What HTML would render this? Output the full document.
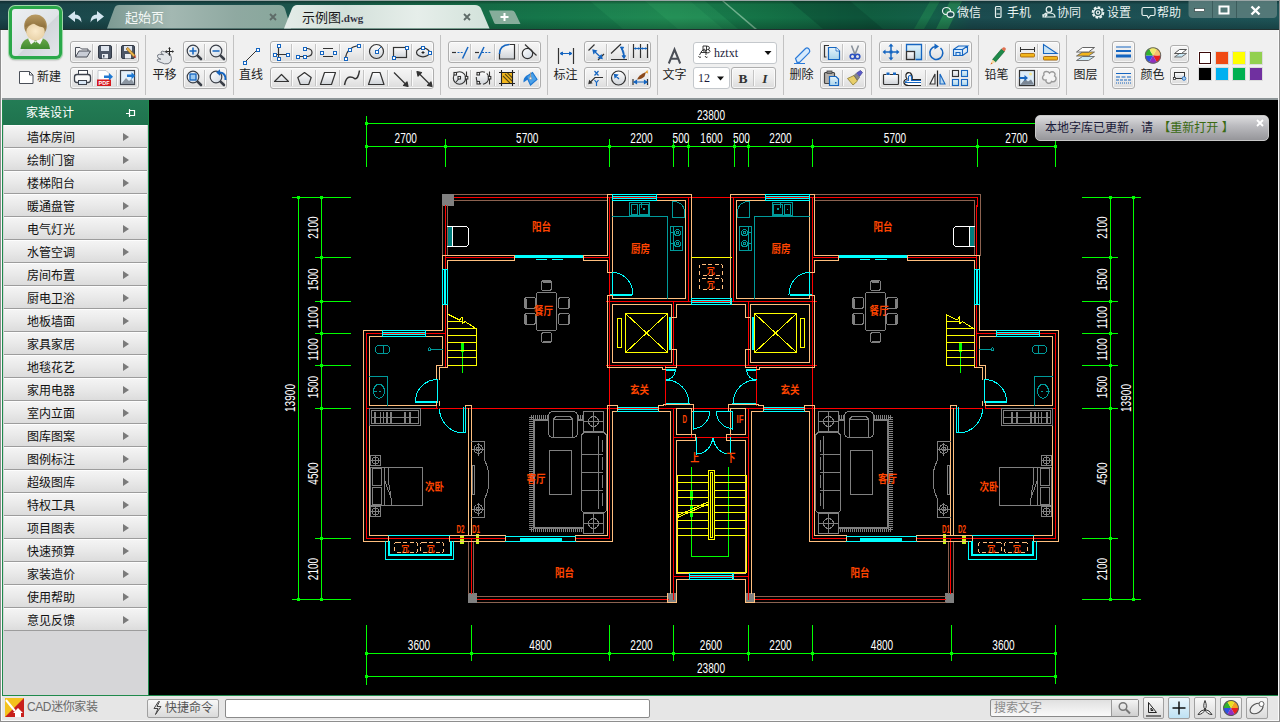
<!DOCTYPE html>
<html lang="zh-CN">
<head>
<meta charset="utf-8">
<title>CAD迷你家装 - 示例图.dwg</title>
<style>
*{box-sizing:border-box;margin:0;padding:0}
html,body{width:1280px;height:722px;overflow:hidden;background:#f0f0f0;font-family:"Liberation Sans","Noto Sans CJK SC",sans-serif;font-size:12px;color:#333}
.abs{position:absolute}
#win{position:absolute;left:0;top:0;width:1280px;height:722px;overflow:hidden;background:#f0f0f0}
#title{position:absolute;left:0;top:0;width:1280px;height:30px;background:#1b464c;border-top:1px solid #9aa6a6;border-bottom:1px solid #20302f}
#title .sheen{position:absolute;left:500px;top:0;width:780px;height:28px;background:linear-gradient(100deg,rgba(20,90,60,0) 0%,rgba(30,140,80,.75) 28%,rgba(30,130,78,.6) 45%,rgba(25,80,80,0) 68%)}
.tab{position:absolute;top:7px;height:21px;font-size:13px;line-height:20px;white-space:nowrap}
.tlink{position:absolute;top:4px;height:16px;line-height:16px;font-size:12px;color:#e8f2f0;white-space:nowrap}
#tb{position:absolute;left:2px;top:30px;width:1276px;height:68px;background:#f0f0f0}
.grp{position:absolute;height:22px;border:1px solid #aeaeae;border-radius:3px;background:linear-gradient(180deg,#f6f6f6 0%,#ececec 50%,#dcdcdc 100%);box-shadow:inset 0 0 0 1px rgba(255,255,255,.7)}
.grp i{position:absolute;top:2px;width:1px;height:16px;background:#c4c4c4;border-right:1px solid #fafafa;box-sizing:content-box}
.r1{top:41px}.r2{top:67px}
.sep{position:absolute;top:35px;width:1px;height:60px;background:#c2c2c2}
.lbl{position:absolute;top:67px;height:16px;line-height:16px;font-size:12px;color:#222;white-space:nowrap;letter-spacing:0}
svg{position:absolute;overflow:visible}
#side{position:absolute;left:2px;top:100px;width:147px;height:596px;background:#d6d6d8;border-left:1px solid #1f8a4c;border-right:1px solid #1f8a4c}
#side .hd{position:absolute;left:0;top:0;width:145px;height:25px;background:linear-gradient(180deg,#237c55,#1f734e);color:#fff;font-size:12px;line-height:26px;padding-left:23px;letter-spacing:0}
#side .it{position:absolute;left:1px;width:143px;height:23px;border-top:1px solid #fdfdfd;border-bottom:1px solid #9c9c9c;background:linear-gradient(180deg,#f4f4f4 0%,#e9e9e9 50%,#dcdcdc 100%);font-size:12px;line-height:21px;padding-left:23px;padding-top:1.5px;color:#111;letter-spacing:0}
#side .it b{position:absolute;left:119px;top:7px;width:0;height:0;border-left:6px solid #7a7a7a;border-top:4.5px solid transparent;border-bottom:4.5px solid transparent}
#cv{position:absolute;left:149px;top:100px;width:1129px;height:595px;background:#000}
#sb{position:absolute;left:0;top:695px;width:1280px;height:27px;background:#e6e6e6;border-top:1px solid #1f8a4c}
.sbtn{position:absolute;height:19px;border:1px solid #a0a0a0;border-radius:2px;background:linear-gradient(180deg,#f8f8f8,#dadada)}
</style>
</head>
<body>
<div id="win">

<div id="title">
 <svg style="left:0;top:0" width="1280" height="28" viewBox="0 0 1280 28">
  <defs>
   <linearGradient id="tb1" x1="0" x2="1" y1="0" y2="0"><stop offset="0" stop-color="#7d9a93"/><stop offset=".35" stop-color="#a3b8b2"/><stop offset=".7" stop-color="#8fa9a1"/><stop offset="1" stop-color="#87a79b"/></linearGradient>
   <linearGradient id="tb2" x1="0" x2="1" y1="0" y2="0"><stop offset="0" stop-color="#e4ece8"/><stop offset=".3" stop-color="#d3e0da"/><stop offset=".65" stop-color="#e6eeea"/><stop offset="1" stop-color="#d2e2da"/></linearGradient>
   <linearGradient id="tbg" x1="0" x2="0" y1="0" y2="1"><stop offset="0" stop-color="#fff" stop-opacity=".25"/><stop offset="1" stop-color="#fff" stop-opacity="0"/></linearGradient>
  </defs>
  <defs>
   <linearGradient id="tbase" x1="0" x2="1" y1="0" y2="0"><stop offset="0" stop-color="#1b464c"/><stop offset=".2" stop-color="#1d5350"/><stop offset=".34" stop-color="#176a48"/><stop offset=".42" stop-color="#15764a"/><stop offset=".52" stop-color="#1a804e"/><stop offset=".6" stop-color="#147246"/><stop offset=".68" stop-color="#105e40"/><stop offset=".73" stop-color="#14604a"/><stop offset=".76" stop-color="#1b4c50"/><stop offset="1" stop-color="#1e5558"/></linearGradient>
   <linearGradient id="tshade" x1="0" x2="0" y1="0" y2="1"><stop offset="0" stop-color="#000" stop-opacity=".35"/><stop offset=".12" stop-color="#000" stop-opacity=".05"/><stop offset=".6" stop-color="#000" stop-opacity="0"/><stop offset="1" stop-color="#000" stop-opacity=".22"/></linearGradient>
  </defs>
  <rect x="0" y="0" width="1280" height="28" fill="url(#tbase)"/>
  <path d="M590 0 L690 0 L723 28 L623 28Z" fill="#34a866" opacity=".22"/>
  <path d="M645 0 L705 0 L738 28 L678 28Z" fill="#3cb46c" opacity=".2"/>
  <path d="M722 0 L724 0 L757 28 L754.500 28Z" fill="#bfe8cc" opacity=".55"/>
  <path d="M790 0 L850 0 L883 28 L823 28Z" fill="#07382c" opacity=".3"/>
  <path d="M936 28 L950 0 L962 0 L948 28Z" fill="#2fa85a" opacity=".5"/>
  <path d="M914 28 L930 0 L940 0 L924 28Z" fill="#2fa85a" opacity=".3"/>
  <rect x="0" y="0" width="1280" height="28" fill="url(#tshade)"/>
  <path d="M107 27.5 L114.500 7 Q115.500 4 119 4 L279 4 Q283.500 4 285 8 L291 27.500Z" fill="url(#tb1)"/>
  <path d="M284 27.500 L292 7.500 Q293.500 4 297 4 L475 4 Q479.500 4 481 7.500 L489.500 27.500Z" fill="url(#tb2)"/>
  <path d="M489 9.500 L512 9.500 Q514 9.500 515 11.500 L520.500 23 L496 23 Q494.500 23 494 21.500Z" fill="#86ad9b"/>
  <path d="M504.500 12 v8 M500.500 16 h8" stroke="#fff" stroke-width="2" fill="none"/>
  <g stroke="#5e6b68" stroke-width="1.800" fill="none"><path d="M270 13 l6 6 M276 13 l-6 6"/><path d="M464 13 l6 6 M470 13 l-6 6"/></g>
  <!-- undo / redo -->
  <path d="M68 15.500 L75 10 L75 13.500 Q81.500 13.500 81.500 21.500 Q79.500 17.500 75 17.500 L75 21Z" fill="#d4e6f0"/>
  <path d="M104 15.500 L97 10 L97 13.500 Q90.500 13.500 90.500 21.500 Q92.500 17.500 97 17.500 L97 21Z" fill="#d4e6f0"/>
  <!-- window buttons -->
  <path d="M1188.500 0 H1277 V13 Q1277 17 1273 17 H1192.500 Q1188.500 17 1188.500 13Z" fill="#5d7f7e" opacity=".85"/>
  <path d="M1212.500 0 V17 M1236.500 0 V17" stroke="#3c5c5c" stroke-width="1"/>
  <rect x="1194.500" y="7.500" width="10" height="3" fill="#fff" stroke="#233" stroke-width=".6"/>
  <rect x="1219.500" y="5.500" width="9" height="7" fill="none" stroke="#fff" stroke-width="2"/>
  <path d="M1251.500 5.500 l8 8 M1259.500 5.500 l-8 8" stroke="#fff" stroke-width="2.400" fill="none"/>
  <!-- link icons -->
  <g fill="none" stroke="#e8f2f0" stroke-width="1.200">
   <ellipse cx="946.500" cy="10" rx="4" ry="3.500"/><ellipse cx="950.500" cy="13.500" rx="3.500" ry="2.800" fill="#1c4a50"/>
   <rect x="995.500" y="5.500" width="5.500" height="11" rx="1"/><path d="M996.500 8 h3.500 M996.500 13 h3.500"/>
   <circle cx="1049" cy="8.500" r="2.800"/><path d="M1043 16 q0 -4 6 -4 q6 0 6 4 z"/><path d="M1042 14 h5 m-2 -2 l2 2 l-2 2"/>
   <circle cx="1098" cy="11.500" r="5.300" stroke-dasharray="2.600 1.400" stroke-width="2"/><circle cx="1098" cy="11.500" r="4.200"/><circle cx="1098" cy="11.500" r="1.700"/>
   <path d="M1143.500 6.500 h10 q1.500 0 1.500 1.500 v5 q0 1.500 -1.500 1.500 h-3 l-2 2.500 l-1.500 -2.500 h-3.500 q-1.500 0 -1.500 -1.500 v-5 q0 -1.500 1.500 -1.500z"/>
  </g>
 </svg>
 <div class="tab" style="left:125px;top:6.500px;color:#f4f8f6">起始页</div>
 <div class="tab" style="left:302px;top:6.500px;color:#1a1a1a">示例图<span style="font-family:'Liberation Serif',serif;font-size:11px;font-weight:bold;color:#334">.dwg</span></div>
 <div class="tlink" style="left:957px">微信</div>
 <div class="tlink" style="left:1007px">手机</div>
 <div class="tlink" style="left:1057px">协同</div>
 <div class="tlink" style="left:1107px">设置</div>
 <div class="tlink" style="left:1157px">帮助</div>
</div>


<div id="tbbg" class="abs" style="left:0;top:30px;width:1280px;height:68px;background:#f0f0f0;border-left:2px solid #cfcfcf;border-right:2px solid #cfcfcf"></div>
<div class="abs" style="left:0;top:98px;width:1280px;height:2px;background:#8c9597"></div>
<!-- avatar -->
<div class="abs" style="left:9px;top:6px;width:53px;height:53px;border-radius:6px;background:#2aa84a;box-shadow:0 0 0 1px #9fd8a8, 0 1px 2px rgba(0,0,0,.4)"></div>
<div class="abs" style="left:12px;top:9px;width:47px;height:47px;border-radius:3px;background:linear-gradient(135deg,#eceff2 0%,#dfe3e7 55%,#d2d6db 56%,#e3e6ea 100%)"></div>

<div class="grp r1" style="left:70.0px;width:68.5px"><i style="left:21.0px"></i><i style="left:45.0px"></i></div>
<div class="grp r2" style="left:70.0px;width:68.5px"><i style="left:21.0px"></i><i style="left:45.0px"></i></div>
<div class="grp r1" style="left:182.5px;width:44.5px"><i style="left:20.6px"></i></div>
<div class="grp r2" style="left:182.5px;width:44.5px"><i style="left:20.6px"></i></div>
<div class="grp r1" style="left:269.5px;width:164.5px"><i style="left:20.3px"></i><i style="left:44.4px"></i><i style="left:68.4px"></i><i style="left:92.4px"></i><i style="left:116.5px"></i><i style="left:140.5px"></i></div>
<div class="grp r2" style="left:269.5px;width:164.5px"><i style="left:20.3px"></i><i style="left:44.4px"></i><i style="left:68.4px"></i><i style="left:92.4px"></i><i style="left:116.5px"></i><i style="left:140.5px"></i></div>
<div class="grp r1" style="left:448.0px;width:93.0px"><i style="left:20.9px"></i><i style="left:44.9px"></i><i style="left:68.9px"></i></div>
<div class="grp r2" style="left:448.0px;width:93.0px"><i style="left:20.9px"></i><i style="left:44.9px"></i><i style="left:68.9px"></i></div>
<div class="grp r1" style="left:584.0px;width:67.0px"><i style="left:21.1px"></i><i style="left:42.5px"></i></div>
<div class="grp r2" style="left:584.0px;width:67.0px"><i style="left:21.1px"></i><i style="left:42.5px"></i></div>
<div class="grp r1" style="left:820.0px;width:45.5px"><i style="left:21.0px"></i></div>
<div class="grp r2" style="left:820.0px;width:45.5px"><i style="left:21.0px"></i></div>
<div class="grp r1" style="left:879.0px;width:93.0px"><i style="left:21.0px"></i><i style="left:45.0px"></i><i style="left:69.1px"></i></div>
<div class="grp r2" style="left:879.0px;width:93.0px"><i style="left:21.0px"></i><i style="left:45.0px"></i><i style="left:69.1px"></i></div>
<div class="grp r1" style="left:1015.0px;width:45.0px"><i style="left:21.0px"></i></div>
<div class="grp r2" style="left:1015.0px;width:45.0px"><i style="left:21.0px"></i></div>
<div class="grp r1" style="left:1112.0px;width:23.0px"></div>
<div class="grp r2" style="left:1112.0px;width:23.0px"></div>
<div class="grp r2" style="left:731.0px;width:45.0px"><i style="left:21.0px"></i></div>
<div class="sep" style="left:145.0px"></div>
<div class="sep" style="left:233.0px"></div>
<div class="sep" style="left:440.0px"></div>
<div class="sep" style="left:547.0px"></div>
<div class="sep" style="left:656.8px"></div>
<div class="sep" style="left:783.0px"></div>
<div class="sep" style="left:871.1px"></div>
<div class="sep" style="left:978.0px"></div>
<div class="sep" style="left:1066.0px"></div>
<div class="sep" style="left:1103.0px"></div>
<div class="grp" style="left:1170px;top:45px;width:19px;height:18px"></div>
<div class="grp" style="left:1170px;top:67px;width:19px;height:18px"></div>
<div class="abs" style="left:693px;top:42px;width:84px;height:22px;border:1px solid #c4c8cc;border-radius:3px;background:#fff"></div>
<div class="abs" style="left:693px;top:67px;width:37px;height:22px;border:1px solid #c4c8cc;border-radius:3px;background:#fff"></div>
<div class="abs" style="left:714px;top:45px;font-family:'Liberation Serif',serif;font-size:12px;line-height:16px;color:#1a1a3a">hztxt</div>
<div class="abs" style="left:698px;top:70px;font-family:'Liberation Serif',serif;font-size:12px;line-height:16px;color:#1a1a3a">12</div>
<div class="abs" style="left:737px;top:69px;width:12px;text-align:center;font-family:'Liberation Serif',serif;font-weight:bold;font-size:13.5px;line-height:19px;color:#333">B</div>
<div class="abs" style="left:759px;top:69px;width:12px;text-align:center;font-family:'Liberation Serif',serif;font-weight:bold;font-style:italic;font-size:13.5px;line-height:19px;color:#333">I</div>
<div class="lbl" style="left:144.5px;width:40px;text-align:center">平移</div>
<div class="lbl" style="left:231.0px;width:40px;text-align:center">直线</div>
<div class="lbl" style="left:545.4px;width:40px;text-align:center">标注</div>
<div class="lbl" style="left:654.5px;width:40px;text-align:center">文字</div>
<div class="lbl" style="left:781.4px;width:40px;text-align:center">删除</div>
<div class="lbl" style="left:976.5px;width:40px;text-align:center">铅笔</div>
<div class="lbl" style="left:1065.4px;width:40px;text-align:center">图层</div>
<div class="lbl" style="left:1132.4px;width:40px;text-align:center">颜色</div>
<div class="lbl" style="left:37px;top:69px">新建</div>
<div class="abs" style="left:1198.5px;top:51.5px;width:12.5px;height:12.5px;background:#ffffff;border:1px solid #3a0a0a;box-shadow:0 0 0 1px #fff"></div>
<div class="abs" style="left:1216.0px;top:51.5px;width:12px;height:12px;background:#f04a14;box-shadow:0 0 0 1px #dcdcdc"></div>
<div class="abs" style="left:1233.0px;top:51.5px;width:12px;height:12px;background:#ffff00;box-shadow:0 0 0 1px #dcdcdc"></div>
<div class="abs" style="left:1250.0px;top:51.5px;width:12px;height:12px;background:#92d050;box-shadow:0 0 0 1px #dcdcdc"></div>
<div class="abs" style="left:1198.5px;top:68.0px;width:12px;height:12px;background:#000000;box-shadow:0 0 0 1px #dcdcdc"></div>
<div class="abs" style="left:1216.0px;top:68.0px;width:12px;height:12px;background:#00b0f0;box-shadow:0 0 0 1px #dcdcdc"></div>
<div class="abs" style="left:1233.0px;top:68.0px;width:12px;height:12px;background:#00b050;box-shadow:0 0 0 1px #dcdcdc"></div>
<div class="abs" style="left:1250.0px;top:68.0px;width:12px;height:12px;background:#7030a0;box-shadow:0 0 0 1px #dcdcdc"></div>
<svg style="left:0;top:0" width="1280" height="100" viewBox="0 0 1280 100">
 <defs>
  <radialGradient id="face" cx=".5" cy=".45" r=".6"><stop offset="0" stop-color="#fbeacb"/><stop offset="1" stop-color="#e6cfa4"/></radialGradient>
  <linearGradient id="hair" x1="0" x2="0" y1="0" y2="1"><stop offset="0" stop-color="#b89a62"/><stop offset="1" stop-color="#8d6f3c"/></linearGradient>
  <linearGradient id="shirt" x1="0" x2="0" y1="0" y2="1"><stop offset="0" stop-color="#6aa84a"/><stop offset="1" stop-color="#3f8a2e"/></linearGradient>
  <linearGradient id="lens" x1="0" x2="1" y1="0" y2="1"><stop offset="0" stop-color="#ffffff"/><stop offset="1" stop-color="#cfd8e2"/></linearGradient>
  <linearGradient id="lb" x1="0" x2="0" y1="0" y2="1"><stop offset="0" stop-color="#e6f4fb"/><stop offset="1" stop-color="#a9d4ea"/></linearGradient>
  <linearGradient id="lg" x1="0" x2="0" y1="0" y2="1"><stop offset="0" stop-color="#ffffff"/><stop offset="1" stop-color="#cfd3d8"/></linearGradient>
 </defs>
 <!-- avatar person -->
 <path d="M20.500 49 Q21 41 28 38.500 L43 38.500 Q49.500 41 50 49Z" fill="url(#shirt)"/>
 <path d="M28 38.500 L33 37 L35.500 43 L38 37 L43 38.500 L40 44.500 L35.500 41 L31 44.500Z" fill="#f4f4f4"/>
 <ellipse cx="35.500" cy="26" rx="11.300" ry="11.500" fill="url(#hair)"/>
 <ellipse cx="35.500" cy="32" rx="9.300" ry="8.600" fill="url(#face)"/>
 <path d="M25 27 Q30 25.500 33 23 Q39 27.500 46 27.500 Q44 15 35.500 15 Q26 15 25 27Z" fill="url(#hair)"/>
 <!-- new doc -->
 <path d="M19.500 71.500 h10 l3.500 3.500 v8.500 h-13.500z" fill="#fff" stroke="#4a4f58" stroke-width="1"/><path d="M29.500 71.500 v3.500 h3.500" fill="none" stroke="#4a4f58"/>
 <!-- G1 row1 -->
 <path d="M75.500 57 v-9.500 h4.500 l1.500 1.500 h6.500 v2" fill="#f4f4f6" stroke="#4a4f58"/><path d="M75.500 57 l3.500 -6 h11.500 l-3.500 6z" fill="#c9cdd6" stroke="#4a4f58"/>
 <rect x="98.500" y="45.500" width="13" height="13" rx="1.500" fill="#4c5666" stroke="#333a46"/><rect x="101" y="46" width="8" height="5" fill="#dfe5ee"/><rect x="102" y="54" width="6" height="4.500" fill="#e8ecf2"/><rect x="103" y="55" width="1.500" height="2.500" fill="#4c5666"/>
 <rect x="121.500" y="45.500" width="13" height="13" rx="1.500" fill="#4c5666" stroke="#333a46"/><rect x="124" y="46" width="8" height="5" fill="#dfe5ee"/><rect x="125" y="54" width="6" height="4.500" fill="#e8ecf2"/><path d="M126 49 l7.500 8 l1.800 -1.700 l-7.500 -8z" fill="#e8b24a" stroke="#8a5a1a" stroke-width=".6"/><path d="M133.500 57 l1.800 -1.700 l.7 2.700z" fill="#c0392b"/>
 <!-- G1 row2 -->
 <rect x="78.500" y="70.500" width="9" height="5" fill="#fff" stroke="#3c424c"/><rect x="74.500" y="74.500" width="16" height="8" rx="2.500" fill="#fafafa" stroke="#3c424c" stroke-width="1.300"/><rect x="78.500" y="80.500" width="8" height="4" fill="#d8e6f4" stroke="#3c424c"/>
 <path d="M98 70.500 h8 l3 3 v12 h-11z" fill="#fff" stroke="#b8bcc4" stroke-width=".8"/><rect x="97" y="79.500" width="14" height="6.500" fill="#d6181e"/><text x="104" y="85" text-anchor="middle" textLength="11" lengthAdjust="spacingAndGlyphs" style="font:bold 5.500px 'Liberation Sans',sans-serif" fill="#fff">PDF</text><path d="M104 75.500 h5 v-2.500 l4 3.800 l-4 3.800 v-2.500 h-5z" fill="#1e78d2"/>
 <rect x="120.500" y="70.500" width="14" height="14" fill="#e4f0fa" stroke="#3c424c" stroke-width="1.200"/><path d="M121 84 l5 -6 l3 3 l2.500 -2 l3 5z" fill="#8c96a2"/><path d="M127 74.500 h4.500 v-2.300 l3.800 3.500 l-3.800 3.500 v-2.300 h-4.500z" fill="#1e78d2"/>
 <!-- pan hand -->
 <path d="M157.500 56.500 q-.5 -2 2 -2.200 l4 .400 q-3 -1.200 -2.500 -2.700 q.8 -1.500 3.800 -.3 l4.200 2 q2.500 1.800 2.500 5 q0 4 -3.500 5 q-3.500 .8 -7 -1.200 l-3.500 -1.300 q-1.200 -1.500 .8 -2.200 l2.500 .2 q-3 -.8 -3.300 -2.700z" fill="#e2e5e9" stroke="#666c76" stroke-width=".9"/>
 <path d="M169.500 48.300 v6.400 M166.300 51.500 h6.400" stroke="#222" stroke-width="1" fill="none"/><path d="M169.500 47 l-1.400 1.700 h2.800z M169.500 56 l-1.400 -1.700 h2.800z M165 51.500 l1.700 -1.400 v2.800z M174 51.500 l-1.700 -1.400 v2.800z" fill="#222"/>
 <!-- G2 magnifiers -->
 <g><path d="M197.300 55.300 l3.700 3.700" stroke="#3a3f48" stroke-width="2.600" stroke-linecap="round"/><circle cx="193" cy="51" r="5.800" fill="url(#lens)" stroke="#3a3f48" stroke-width="1.200"/></g><g transform="translate(23 0)"><path d="M197.300 55.300 l3.700 3.700" stroke="#3a3f48" stroke-width="2.600" stroke-linecap="round"/><circle cx="193" cy="51" r="5.800" fill="url(#lens)" stroke="#3a3f48" stroke-width="1.200"/></g><g transform="translate(0 26)"><path d="M197.300 55.300 l3.700 3.700" stroke="#3a3f48" stroke-width="2.600" stroke-linecap="round"/><circle cx="193" cy="51" r="5.800" fill="url(#lens)" stroke="#3a3f48" stroke-width="1.200"/></g><g transform="translate(23 26)"><path d="M197.300 55.300 l3.700 3.700" stroke="#3a3f48" stroke-width="2.600" stroke-linecap="round"/><circle cx="193" cy="51" r="5.800" fill="url(#lens)" stroke="#3a3f48" stroke-width="1.200"/></g>
 <path d="M193 47.500 v7 M189.500 51 h7 M212.500 51 h7" stroke="#1565c0" stroke-width="1.500" fill="none"/>
 <rect x="190" y="74" width="6" height="6" fill="#9cc8ee" stroke="#1565c0" stroke-width="1.300"/>
 <path d="M224.500 80 q.5 -6 -4.500 -6.500 v2.200 l-3.800 -3.200 l3.800 -3.200 v2.200 q7 .5 6.500 8.500z" fill="#1565c0"/>
 <!-- line icon -->
 <path d="M244.500 62.500 L257.500 49.500" stroke="#333" stroke-width="1"/><rect x="243.5" y="61.5" width="3" height="3" fill="#fff" stroke="#1565c0"/><rect x="256.5" y="48.5" width="3" height="3" fill="#fff" stroke="#1565c0"/>
 <!-- G3 row1 -->
 <g fill="#fff" stroke="#1565c0" stroke-width="1">
  <path d="M278.500 46 v13 M274.500 54.500 h13" stroke="#333" stroke-width="1.200" fill="none"/><rect x="277.5" y="44.5" width="3" height="3"/><rect x="277.5" y="57.5" width="3" height="3"/><rect x="273.5" y="53.5" width="3" height="3"/><rect x="286.5" y="53.5" width="3" height="3"/>
  <path d="M297.500 56.500 h10 q4.500 -.5 4.500 -4 q0 -3.500 -4.500 -4 h-3" stroke="#333" stroke-width="1.200" fill="none"/><rect x="296.5" y="55.5" width="3" height="3"/><rect x="303.5" y="55.5" width="3" height="3"/><rect x="303.5" y="47.5" width="3" height="3"/>
  <path d="M323 48.500 h10 M323 56.500 h10" stroke="#333" stroke-width="1.200" fill="none"/><rect x="320.5" y="51.5" width="3" height="3"/><rect x="333.5" y="51.5" width="3" height="3"/>
  <path d="M345.500 58.500 q1 -11 13 -13" stroke="#333" stroke-width="1.200" fill="none"/><rect x="344.5" y="57.5" width="3" height="3"/><rect x="348.5" y="48.5" width="3" height="3"/><rect x="357.5" y="44.5" width="3" height="3"/>
  <circle cx="376.500" cy="51.500" r="7" stroke="#333" stroke-width="1.200" fill="url(#lg)"/><path d="M376.500 51.500 l4.500 -4.500" stroke="#1565c0" fill="none"/><rect x="375.5" y="50.5" width="3" height="3"/>
  <rect x="393.500" y="47.500" width="13" height="10" stroke="#333" stroke-width="1.200" fill="url(#lg)"/><rect x="392.5" y="56.5" width="3" height="3"/><rect x="405.5" y="46.5" width="3" height="3"/>
  <ellipse cx="423" cy="52.500" rx="6.500" ry="4.300" stroke="#333" stroke-width="1.200" fill="url(#lg)"/><path d="M423 51 v3 M421.500 52.500 h3" stroke="#222" fill="none"/><rect x="421.5" y="46.5" width="3" height="3"/><rect x="428.5" y="51.5" width="3" height="3"/>
 </g>
 <!-- G3 row2 -->
 <g fill="url(#lg)" stroke="#333" stroke-width="1.200" stroke-linejoin="round">
  <path d="M274.500 81.500 l7 -7 l7 7z"/>
  <path d="M304.500 72.500 l6.700 5 l-2.500 7 h-8.400 l-2.500 -7z"/>
  <path d="M320.500 84.500 l4 -12 h11 l-4 12z"/>
  <path d="M344.500 85 q1.500 -8 5.500 -8 q3 0 4.500 1.500 q3.500 1.500 5 -8" fill="none" stroke-width="1.500"/>
  <path d="M368.500 84.500 l4 -12 h7.500 l4 12z"/>
  <path d="M394 72.500 l13 13" fill="none"/><path d="M408 86.500 l-4.500 -1 l3.500 -3.500z" fill="#333"/>
  <path d="M418 72.500 l13 13" fill="none"/><path d="M432 86.500 l-4.500 -1 l3.500 -3.500z M417 71.500 l4.500 1 l-3.500 3.500z" fill="#333"/>
 </g>
 <!-- G4 row1 -->
 <g fill="none" stroke="#333" stroke-width="1.200">
  <path d="M452 52.500 h4"/><path d="M457.500 52.500 h6" stroke="#1565c0" stroke-dasharray="2 1.200"/><path d="M468 47 l-5.500 11.500" stroke="#1565c0" stroke-width="1.500"/>
  <path d="M475 52.500 h4"/><path d="M482 52.500 h9" stroke="#1565c0" stroke-dasharray="2 1.200"/><path d="M484 47 l-5.500 11.500" stroke="#1565c0" stroke-width="1.500"/>
  <path d="M499.500 53 v6 h15 v-14.500 h-5" fill="url(#lg)"/><path d="M499.500 54 q0 -9 10 -9.500" stroke="#1565c0" stroke-width="1.500"/>
  <circle cx="527.500" cy="53.500" r="5.200" fill="url(#lens)"/><path d="M525 44.500 l11.500 11"/>
 </g>
 <!-- G4 row2 -->
 <g fill="none" stroke="#333" stroke-width="1.100">
  <circle cx="459.500" cy="78" r="6.200" fill="url(#lg)"/><path d="M466.500 71.500 v13 M456 82 l3.500 -4"/><rect x="458" y="76.500" width="2.500" height="2.500" fill="#fff"/><rect x="454" y="72.500" width="2.500" height="2.500" fill="#fff"/><rect x="465.300" y="76.500" width="2.500" height="2.500" fill="#fff"/>
  <circle cx="482.500" cy="78" r="6.200" fill="url(#lg)" stroke-dasharray="9 2"/><path d="M489.500 71.500 v13"/><rect x="477" y="72.500" width="2.500" height="2.500" fill="#fff"/><rect x="477" y="81.500" width="2.500" height="2.500" fill="#fff"/><rect x="488.300" y="76.500" width="2.500" height="2.500" fill="#fff"/>
  <rect x="501.500" y="72.500" width="11" height="11" fill="#f2b61c" stroke="none"/><path d="M503 76 l7 7 M505 74 l7 7 M507.500 73 l5 5" stroke="#5a4a10"/><path d="M501.500 70 v16 M512.500 70 v16 M499 72.500 h16 M499 83.500 h16" stroke="#222"/>
  <path d="M523.500 82.500 q-.5 -5 3.500 -7 l1.500 3.500z" fill="#1e78d2" stroke="none"/><path d="M526.500 76.500 l6 -4 l4.500 7 l-6.500 5.500z" fill="#4aa0e8" stroke="#1e78d2"/><path d="M530.500 78 v-5.500" stroke="#999"/><circle cx="530.500" cy="78.300" r="1.200" fill="#eee" stroke="#888" stroke-width=".6"/>
 </g>
 <!-- dim icon -->
 <path d="M558.500 48 v16 M573.500 48 v16" stroke="#333" stroke-width="1.200"/><path d="M560 53.500 h12 M560 53.500 l2.500 -1.500 v3z M572 53.500 l-2.500 -1.500 v3z" stroke="#1565c0" fill="#1565c0" stroke-width="1"/>
 <!-- G5 row1 -->
 <g fill="none" stroke="#333" stroke-width="1.200">
  <path d="M588.500 50.500 l6 -6 M598 60 l6 -6"/><path d="M593 50 l9 8.500 M593 50 l3.300 .8 l-2.500 2.500z M602 58.500 l-3.300 -.8 l2.500 -2.500z" stroke="#1565c0" fill="#1565c0"/>
  <path d="M611 59.500 h16 M611 53.500 l10 -9.500"/><path d="M620.500 47 q4.500 3.500 3.500 11 M620.500 47 l3.200 .3 l-1.800 2.500z M624 58.500 l-1.800 -2.800 h3.300z" stroke="#1565c0" fill="#1565c0" stroke-width="1"/>
  <path d="M633.500 44 v14 M640.500 44 v14 M647.500 44 v14"/><path d="M634 48.500 h13" stroke="#1565c0"/><path d="M634 48.500 l2 -1.300 v2.600z M640 48.500 l-2 -1.300 v2.600z M641 48.500 l2 -1.300 v2.600z M647 48.500 l-2 -1.300 v2.600z" fill="#1565c0" stroke="none"/>
 </g>
 <!-- G5 row2 -->
 <g fill="none" stroke="#333" stroke-width="1.200">
  <path d="M589 83.500 l6 -6 h8 M589 83.500 l2.500 -.5 l-2 -2z" /><path d="M594.500 71 l4 4.500 M598.500 71 l-4 4.500 M594.500 80 l2 2.500 l2 -2.500 M596.500 82.500 v3.500" stroke="#1565c0"/>
  <circle cx="618.500" cy="78" r="7" fill="url(#lg)"/><path d="M619 79 l-4.500 -4.500 M614.500 74.500 l3 .5 l-2.500 2.500z" stroke="#1565c0" fill="#1565c0"/>
  <path d="M633 79 v6 M647.500 79 v6" /><path d="M634 82 h13 M634 82 l2.500 -1.500 v3z M647 82 l-2.500 -1.500 v3z" stroke="#1565c0" fill="#1565c0"/><path d="M637 79.500 q2 -5 9 -7.500 l-1.500 4.500 q-3 3 -7.500 3z" fill="#8b4a1c" stroke="none"/><path d="M645 72.500 l2.500 -2.500 l.5 3.500z" fill="#e8a030" stroke="none"/>
 </g>
 <!-- text A -->
 <path d="M668.800 63.500 l5.700 -14 l5.700 14 M670.800 58.800 h7.400" fill="none" stroke="#4a4e56" stroke-width="2"/>
 <!-- font combo icon -->
 <path d="M699.500 55 q2 -5 5 -6 M701 52.500 h6 M704.500 49 q2 2 1.500 6 M703 46 h3.500 v5 h-3.500z M706.500 46 q3 0 3 2 q0 1.500 -2 1.500 q2.500 0 2.500 2 q0 1.500 -3.500 1.500 M698.500 56 q1 2.500 2.500 1 M705 56 q1 2.500 2.500 1" fill="none" stroke="#222" stroke-width=".9"/>
 <path d="M764.500 51 h7 l-3.500 4z M717 76.500 h7 l-3.500 4z" fill="#111"/>
 <!-- eraser -->
 <path d="M795.500 58.500 l10 -10 q1.500 -1.200 3 0 l1 1.500 q.8 1.500 -.5 2.800 l-9.500 9.500 h-2.500z" fill="#d6eafc" stroke="#2a7ad8" stroke-width="1.200"/><path d="M794 63.500 h11" stroke="#2a7ad8" stroke-width="1"/>
 <!-- G6 -->
 <path d="M829 45.500 h-4.500 v11.500 h2" fill="none" stroke="#333" stroke-width="1.200"/><path d="M828.500 47.500 h7.500 l3.500 3.500 v8.500 h-11z" fill="url(#lb)" stroke="#1565c0" stroke-width="1.200"/><path d="M836 47.500 v3.500 h3.500" fill="#fff" stroke="#1565c0" stroke-width=".8"/>
 <path d="M851.500 45.500 l3.500 9 M858.500 45.500 l-3.500 9" stroke="#8a929c" stroke-width="1.600" fill="none"/><circle cx="852.500" cy="56.500" r="2.300" fill="none" stroke="#2a4fc0" stroke-width="1.600"/><circle cx="857.500" cy="56.500" r="2.300" fill="none" stroke="#2a4fc0" stroke-width="1.600"/>
 <rect x="824.500" y="72.500" width="10" height="11" rx="1" fill="#b4b0aa" stroke="#444" stroke-width="1.200"/><rect x="827" y="71" width="5" height="2.500" fill="#888" stroke="#444" stroke-width=".8"/><path d="M829.500 76.500 h6.500 l2.500 2.500 v6.500 h-9z" fill="url(#lb)" stroke="#1565c0" stroke-width="1.200"/><rect x="835" y="82" width="1.500" height="1.500" fill="#1565c0"/>
 <path d="M847.500 78.500 l6.500 -3 l3.500 5.500 l-4.500 4z" fill="#e8cf6a" stroke="#8a7a30" stroke-width=".8"/><path d="M854 75.500 l2 -2 l3.500 4 l-2 2.500z" fill="#888" stroke="#555" stroke-width=".6"/><path d="M856.500 73 l4 -2.500 l2 2 l-3 4z" fill="#5a5ac8" stroke="#338" stroke-width=".6"/>
 <!-- G7 row1 -->
 <path d="M891 45 v14 M884 52 h14" stroke="#1565c0" stroke-width="1.500"/><path d="M891 43.500 l-2.500 3 h5z M891 60.500 l-2.500 -3 h5z M882.500 52 l3 -2.500 v5z M899.500 52 l-3 -2.500 v5z" fill="#1565c0"/><rect x="889.5" y="50.5" width="3" height="3" fill="#1565c0"/>
 <path d="M906.500 51 v-6.500 h15 v15 h-6" fill="url(#lb)" stroke="#1565c0" stroke-width="1.300"/><rect x="906.500" y="51.500" width="8" height="8" fill="url(#lg)" stroke="#333" stroke-width="1.300"/>
 <path d="M935.500 46.500 a6.500 6.500 0 1 0 5 1.500" fill="none" stroke="#1565c0" stroke-width="1.600"/><path d="M934.500 43.500 l4.500 3 l-4.500 3z" fill="#1565c0"/>
 <path d="M953.500 49.500 h9 v6 h-9z M953.500 49.500 l5 -3.500 h9 l-5 3.500 M967.500 46 v6 l-5 3.500 M956 55.500 v-3 h4 v3" fill="#d6eafc" stroke="#1565c0" stroke-width="1.100"/>
 <!-- G7 row2 -->
 <path d="M883.500 74.500 v9 q0 1 1 1 h13 q1 0 1 -1 v-9" fill="url(#lg)" stroke="#333" stroke-width="1.200"/><path d="M883.500 74.500 h3 m3 0 h3.500 m3 0 h2.500" stroke="#333" stroke-width="1.200"/><rect x="886.500" y="72.500" width="3" height="2.500" fill="#1565c0"/><rect x="893" y="72.500" width="3" height="2.500" fill="#1565c0"/>
 <path d="M921 79.500 h-9 q1 -3.500 -1.500 -6.500 q-3 -1.500 -4.500 1.500 q-.5 3 1 4.500 q-3.500 1 -3 4 q1 2.500 4.500 2.500 h12.500" fill="#fff" stroke="#222" stroke-width="1.200"/><path d="M921 80.500 h-9.500 v-4 q-1.500 -2 -3 0 v4 q-3 0 -3 2 h15.500" fill="none" stroke="#1565c0" stroke-width="1.200"/>
 <path d="M937.500 70.500 v16" stroke="#222" stroke-width="1.200"/><path d="M935 74 v10 h-5z" fill="#f6f6f6" stroke="#333" stroke-width="1.100"/><path d="M940 74 v10 h5z" fill="#b6d8f0" stroke="#1565c0" stroke-width="1.100"/>
 <g fill="url(#lb)" stroke="#1565c0" stroke-width="1.100"><rect x="961.500" y="70.500" width="6" height="6"/><rect x="952.500" y="79.500" width="6" height="6"/><rect x="961.500" y="79.500" width="6" height="6"/></g><rect x="952.500" y="70.500" width="6" height="6" fill="url(#lg)" stroke="#333" stroke-width="1.100"/>
 <!-- pencil -->
 <path d="M992.500 59.500 l9 -10.500 l3 2.500 l-9 10.500z" fill="#1e8a4a" stroke="#0e5a2a" stroke-width=".6"/><path d="M1001.500 49 l1.500 -1.500 q1.500 -.5 2.500 .5 q.8 1 0 2 l-1 1.500z" fill="#e07050"/><path d="M992.500 59.500 l3 2.500 l-5 2.500z" fill="#f4d8a0"/><path d="M990.500 64.500 l1 -2 l1 1z" fill="#e05a10"/>
 <!-- G8 -->
 <path d="M1020.500 47 v5 M1034.500 47 v5 M1020.500 49.500 h14" stroke="#333" stroke-width="1"/><rect x="1020.500" y="53.500" width="14" height="3.500" rx=".8" fill="#f2b61c" stroke="#a8680a" stroke-width=".9"/>
 <path d="M1043.500 44.500 v9 h13.500z" fill="#c8e4f6" stroke="#1565c0" stroke-width="1.100"/><rect x="1043.500" y="56.500" width="14" height="3.500" rx=".8" fill="#f2b61c" stroke="#a8680a" stroke-width=".9"/>
 <rect x="1019.500" y="70.500" width="15" height="15" fill="#dcecf8" stroke="#333" stroke-width="1.200"/><path d="M1020 85 l5 -6 l3 2.500 l3 -2 l3 5z" fill="#7a8694"/><circle cx="1030.500" cy="74" r="1.500" fill="#f8e890"/><path d="M1019.500 77 h5 v-2 l3.500 3 l-3.500 3 v-2 h-5z" fill="#1565c0"/>
 <path d="M1044 75 q-1 -3.500 2.500 -3.500 q2 0 3 1.500 q1.500 -2 4 -1 q2.500 1.500 1 4 q2.500 1.500 1 4.500 q-1.500 2 -4 1 q-1 2.500 -4 1.500 q-2 -1 -1.500 -3 q-3 .5 -3.500 -2 q0 -2 1.500 -3z" fill="#f4f4f4" stroke="#9a9a9a" stroke-width="1.400"/>
 <!-- layers -->
 <path d="M1076.500 60.500 l6 -4 h12 l-6 4z" fill="#c8e8f6" stroke="#666" stroke-width=".9"/><path d="M1076.500 56 l6 -4 h12 l-6 4z" fill="#f2b61c" stroke="#666" stroke-width=".9"/><path d="M1076.500 52 l6 -4.500 h12 l-6 4.500z" fill="#fff" stroke="#555" stroke-width=".9"/>
 <!-- line weight buttons -->
 <path d="M1116 47 h15" stroke="#1565c0" stroke-width="1"/><path d="M1116 51 h15" stroke="#1565c0" stroke-width="2"/><path d="M1116 56 h15" stroke="#1565c0" stroke-width="3"/>
 <path d="M1116 73.500 h15" stroke="#1565c0" stroke-width="1"/><path d="M1116 77 h15" stroke="#1565c0" stroke-width="1" stroke-dasharray="4 1.500"/><path d="M1116 80 h15" stroke="#1565c0" stroke-width="1" stroke-dasharray="3 1"/><path d="M1116 83 h15" stroke="#1565c0" stroke-width="1" stroke-dasharray="1 1"/>
 <!-- color wheel -->
 <g transform="rotate(30 1153 55.500)"><path d="M1153 55.500 L1153 47.500 A8 8 0 0 1 1159.900 51.500Z" fill="#f2a020"/><path d="M1153 55.500 L1159.900 51.500 A8 8 0 0 1 1159.900 59.500Z" fill="#e82020"/><path d="M1153 55.500 L1159.900 59.500 A8 8 0 0 1 1153 63.500Z" fill="#9030c0"/><path d="M1153 55.500 L1153 63.500 A8 8 0 0 1 1146.100 59.500Z" fill="#3050e0"/><path d="M1153 55.500 L1146.100 59.500 A8 8 0 0 1 1146.100 51.500Z" fill="#30b030"/><path d="M1153 55.500 L1146.100 51.500 A8 8 0 0 1 1153 47.500Z" fill="#e8e020"/><circle cx="1153" cy="55.500" r="7.800" fill="none" stroke="#666" stroke-width="1"/><ellipse cx="1153" cy="51.500" rx="5.500" ry="3" fill="#fff" opacity=".35"/></g>
 <!-- small buttons icons -->
 <path d="M1174.500 57 l5 -3.500 h7 l-5 3.500z" fill="#c8e8f6" stroke="#555" stroke-width=".8"/><path d="M1174.500 53.500 l5 -4 h7 l-5 4z" fill="#fff" stroke="#444" stroke-width=".9"/>
 <rect x="1174.500" y="72.500" width="10" height="6" fill="url(#lg)" stroke="#333" stroke-width="1"/><rect x="1173.500" y="77.500" width="2" height="2" fill="#fff" stroke="#333" stroke-width=".8"/><circle cx="1184" cy="78.500" r="1.800" fill="#a8d0ee" stroke="#1565c0" stroke-width=".8"/>
</svg>

<div id="side"><div class="hd">家装设计<svg style="left:123px;top:9px" width="10" height="9" viewBox="0 0 10 9"><path d="M0 4.500 h3 M3.500 1.500 h5 v5 h-5z M3.500 0 v8" stroke="#fff" stroke-width="1.200" fill="none"/></svg></div><div class="it" style="top:25px">墙体房间<b></b></div><div class="it" style="top:48px">绘制门窗<b></b></div><div class="it" style="top:71px">楼梯阳台<b></b></div><div class="it" style="top:94px">暖通盘管<b></b></div><div class="it" style="top:117px">电气灯光<b></b></div><div class="it" style="top:140px">水管空调<b></b></div><div class="it" style="top:163px">房间布置<b></b></div><div class="it" style="top:186px">厨电卫浴<b></b></div><div class="it" style="top:209px">地板墙面<b></b></div><div class="it" style="top:232px">家具家居<b></b></div><div class="it" style="top:255px">地毯花艺<b></b></div><div class="it" style="top:278px">家用电器<b></b></div><div class="it" style="top:301px">室内立面<b></b></div><div class="it" style="top:324px">图库图案<b></b></div><div class="it" style="top:347px">图例标注<b></b></div><div class="it" style="top:370px">超级图库<b></b></div><div class="it" style="top:393px">特权工具<b></b></div><div class="it" style="top:416px">项目图表<b></b></div><div class="it" style="top:439px">快速预算<b></b></div><div class="it" style="top:462px">家装造价<b></b></div><div class="it" style="top:485px">使用帮助<b></b></div><div class="it" style="top:508px">意见反馈<b></b></div></div>
<div id="cv"><svg width="1129" height="595" viewBox="149 100 1129 595" style="left:0;top:0;position:absolute">
<style>.lat{font-family:"Liberation Sans",sans-serif}.cjk{font-family:"Liberation Sans","Noto Sans CJK SC",sans-serif}.nar{font-family:"Liberation Sans Narrow","Liberation Sans",sans-serif}</style>
<g shape-rendering="crispEdges"><rect x="365" y="145" width="3" height="3" fill="#00ff00"/><rect x="444" y="145" width="3" height="3" fill="#00ff00"/><rect x="608" y="145" width="3" height="3" fill="#00ff00"/><rect x="672" y="145" width="3" height="3" fill="#00ff00"/><rect x="687" y="145" width="3" height="3" fill="#00ff00"/><rect x="733" y="145" width="3" height="3" fill="#00ff00"/><rect x="747" y="145" width="3" height="3" fill="#00ff00"/><rect x="811" y="145" width="3" height="3" fill="#00ff00"/><rect x="976" y="145" width="3" height="3" fill="#00ff00"/><rect x="1054" y="145" width="3" height="3" fill="#00ff00"/><rect x="365" y="122" width="3" height="3" fill="#00ff00"/><rect x="365" y="652" width="3" height="3" fill="#00ff00"/><rect x="470" y="652" width="3" height="3" fill="#00ff00"/><rect x="608" y="652" width="3" height="3" fill="#00ff00"/><rect x="672" y="652" width="3" height="3" fill="#00ff00"/><rect x="747" y="652" width="3" height="3" fill="#00ff00"/><rect x="811" y="652" width="3" height="3" fill="#00ff00"/><rect x="950" y="652" width="3" height="3" fill="#00ff00"/><rect x="1054" y="652" width="3" height="3" fill="#00ff00"/><rect x="365" y="675" width="3" height="3" fill="#00ff00"/><rect x="1054" y="675" width="3" height="3" fill="#00ff00"/><rect x="320" y="196" width="3" height="3" fill="#00ff00"/><rect x="320" y="256" width="3" height="3" fill="#00ff00"/><rect x="320" y="300" width="3" height="3" fill="#00ff00"/><rect x="320" y="332" width="3" height="3" fill="#00ff00"/><rect x="320" y="364" width="3" height="3" fill="#00ff00"/><rect x="320" y="407" width="3" height="3" fill="#00ff00"/><rect x="320" y="537" width="3" height="3" fill="#00ff00"/><rect x="320" y="598" width="3" height="3" fill="#00ff00"/><rect x="297" y="196" width="3" height="3" fill="#00ff00"/><rect x="297" y="598" width="3" height="3" fill="#00ff00"/><rect x="1109" y="196" width="3" height="3" fill="#00ff00"/><rect x="1109" y="256" width="3" height="3" fill="#00ff00"/><rect x="1109" y="300" width="3" height="3" fill="#00ff00"/><rect x="1109" y="332" width="3" height="3" fill="#00ff00"/><rect x="1109" y="364" width="3" height="3" fill="#00ff00"/><rect x="1109" y="407" width="3" height="3" fill="#00ff00"/><rect x="1109" y="537" width="3" height="3" fill="#00ff00"/><rect x="1109" y="598" width="3" height="3" fill="#00ff00"/><rect x="1132" y="196" width="3" height="3" fill="#00ff00"/><rect x="1132" y="598" width="3" height="3" fill="#00ff00"/><rect x="442" y="194" width="12" height="12" fill="#808080"/><rect x="468" y="593" width="9" height="10" fill="#808080"/><rect x="945" y="593" width="9" height="10" fill="#808080"/><rect x="668" y="593" width="9" height="10" fill="#808080"/><rect x="745" y="593" width="9" height="10" fill="#808080"/><rect x="514" y="255" width="70" height="3" fill="#00ffff"/><rect x="838" y="255" width="70" height="3" fill="#00ffff"/><rect x="617" y="407" width="42" height="3" fill="#00ffff"/><rect x="763" y="407" width="42" height="3" fill="#00ffff"/><rect x="520" y="538" width="42" height="3" fill="#00ffff"/><rect x="860" y="538" width="42" height="3" fill="#00ffff"/><rect x="609" y="293.5" width="23" height="2" fill="#00ffff"/><rect x="790" y="293.5" width="23" height="2" fill="#00ffff"/><rect x="415" y="400.5" width="23" height="2.5" fill="#00ffff"/><rect x="984" y="400.5" width="23" height="2.5" fill="#00ffff"/><rect x="665" y="369" width="11" height="2" fill="#00ffff"/><rect x="746" y="369" width="11" height="2" fill="#00ffff"/><rect x="665" y="378.5" width="5" height="2" fill="#00ffff"/><rect x="752" y="378.5" width="5" height="2" fill="#00ffff"/><rect x="665" y="402.5" width="25" height="2" fill="#00ffff"/><rect x="732" y="402.5" width="25" height="2" fill="#00ffff"/><rect x="668.5" y="316.5" width="2" height="33.5" fill="#00ffff"/><rect x="751.5" y="316.5" width="2" height="33.5" fill="#00ffff"/><rect x="448" y="227" width="4" height="19" fill="#007c7c"/><rect x="970" y="227" width="4" height="19" fill="#007c7c"/><rect x="634" y="209" width="1" height="1" fill="#009a9a"/><rect x="787" y="209" width="1" height="1" fill="#009a9a"/><rect x="643" y="208" width="2" height="2" fill="#009a9a"/><rect x="777" y="208" width="2" height="2" fill="#009a9a"/><rect x="543" y="280.5" width="7.5" height="2.5" fill="#808080"/><rect x="871.5" y="280.5" width="7.5" height="2.5" fill="#808080"/><rect x="543" y="340.5" width="7.5" height="2.5" fill="#808080"/><rect x="871.5" y="340.5" width="7.5" height="2.5" fill="#808080"/><rect x="524.5" y="299" width="2.5" height="8.5" fill="#808080"/><rect x="895" y="299" width="2.5" height="8.5" fill="#808080"/><rect x="524.5" y="315" width="2.5" height="8.5" fill="#808080"/><rect x="895" y="315" width="2.5" height="8.5" fill="#808080"/><rect x="567.5" y="299" width="2.5" height="8.5" fill="#808080"/><rect x="852" y="299" width="2.5" height="8.5" fill="#808080"/><rect x="567.5" y="315" width="2.5" height="8.5" fill="#808080"/><rect x="852" y="315" width="2.5" height="8.5" fill="#808080"/><rect x="461" y="342" width="3" height="10" fill="#00ff00"/><rect x="958.5" y="342" width="3" height="10" fill="#00ff00"/><rect x="379" y="391" width="2" height="1" fill="#009a9a"/><rect x="1041" y="391" width="2" height="1" fill="#009a9a"/><rect x="708" y="470" width="7" height="70" fill="#000"/><rect x="690" y="490" width="3" height="10" fill="#00ff00"/><rect x="690" y="506" width="3" height="11" fill="#00ff00"/><rect x="460" y="536" width="4" height="8" fill="#c8f018"/><rect x="962" y="536" width="4" height="8" fill="#c8f018"/><rect x="476" y="534" width="3" height="10" fill="#c8f018"/><rect x="943" y="534" width="3" height="10" fill="#c8f018"/></g>
<g fill="none" shape-rendering="crispEdges" stroke-linecap="square">
<path stroke="#00ff00" stroke-width="1" d="M366.5 123.5 L1035.5 123.5 M366.5 146.5 L1055.5 146.5 M366.5 116.5 L366.5 166.5 M445.5 139.5 L445.5 166.5 M609.5 139.5 L609.5 166.5 M673.5 139.5 L673.5 166.5 M688.5 139.5 L688.5 166.5 M734.5 139.5 L734.5 166.5 M748.5 139.5 L748.5 166.5 M812.5 139.5 L812.5 166.5 M977.5 139.5 L977.5 166.5 M1055.5 139.5 L1055.5 166.5 M366.5 653.5 L1055.5 653.5 M366.5 676.5 L1055.5 676.5 M366.5 625.5 L366.5 684.5 M1055.5 625.5 L1055.5 683.5 M471.5 625.5 L471.5 660.5 M609.5 625.5 L609.5 660.5 M673.5 625.5 L673.5 660.5 M748.5 625.5 L748.5 660.5 M812.5 625.5 L812.5 660.5 M951.5 625.5 L951.5 660.5 M298.5 197.5 L298.5 599.5 M321.5 197.5 L321.5 599.5 M292.5 197.5 L350.5 197.5 M292.5 599.5 L350.5 599.5 M315.5 257.5 L350.5 257.5 M315.5 301.5 L350.5 301.5 M315.5 333.5 L350.5 333.5 M315.5 365.5 L350.5 365.5 M315.5 408.5 L350.5 408.5 M315.5 538.5 L350.5 538.5 M1133.5 197.5 L1133.5 599.5 M1110.5 197.5 L1110.5 599.5 M1082.5 197.5 L1140.5 197.5 M1082.5 599.5 L1140.5 599.5 M1082.5 257.5 L1117.5 257.5 M1082.5 301.5 L1117.5 301.5 M1082.5 333.5 L1117.5 333.5 M1082.5 365.5 L1117.5 365.5 M1082.5 408.5 L1117.5 408.5 M1082.5 538.5 L1117.5 538.5 M462.5 342.5 L462.5 372.5 M960.5 342.5 L960.5 372.5 M691.5 467.5 L691.5 556.5 L728.5 556.5 L728.5 467.5"/>
<path stroke="#ff0000" stroke-width="1" d="M454.5 197.5 L968.5 197.5 M445.5 205.5 L445.5 366.5 M976.5 205.5 L976.5 366.5 M445.5 257.5 L514.5 257.5 M976.5 257.5 L908.5 257.5 M583.5 257.5 L609.5 257.5 M838.5 257.5 L812.5 257.5 M609.5 197.5 L609.5 538.5 M812.5 197.5 L812.5 538.5 M688.5 197.5 L688.5 301.5 M733.5 197.5 L733.5 301.5 M606.5 301.5 L816.5 301.5 M673.5 301.5 L673.5 365.5 M748.5 301.5 L748.5 365.5 M673.5 408.5 L673.5 599.5 M748.5 408.5 L748.5 599.5 M606.5 365.5 L816.5 365.5 M665.5 365.5 L665.5 405.5 M756.5 365.5 L756.5 405.5 M366.5 408.5 L437.5 408.5 M1055.5 408.5 L985.5 408.5 M439.5 408.5 L711.5 408.5 M982.5 408.5 L711.5 408.5 M366.5 333.5 L445.5 333.5 M1055.5 333.5 L976.5 333.5 M366.5 333.5 L366.5 538.5 M1055.5 333.5 L1055.5 538.5 M366.5 538.5 L505.5 538.5 M1055.5 538.5 L916.5 538.5 M575.5 538.5 L609.5 538.5 M846.5 538.5 L812.5 538.5 M471.5 538.5 L471.5 593.5 M950.5 538.5 L950.5 593.5 M477.5 599.5 L668.5 599.5 M945.5 599.5 L754.5 599.5 M673.5 437.5 L748.5 437.5 M673.5 576.5 L748.5 576.5 M436.5 405.5 L436.5 408.5 M985.5 405.5 L985.5 408.5 M691.5 428.5 L691.5 437.5 M730.5 428.5 L730.5 437.5 M968.5 197.5 L977.5 197.5 L977.5 206.5"/>
<path stroke="#8c6250" stroke-width="1" d="M454.5 194.5 L607.5 194.5 M968.5 194.5 L814.5 194.5 M454.5 200.5 L607.5 200.5 M968.5 200.5 L814.5 200.5 M442.5 205.5 L442.5 255.5 M447.5 205.5 L447.5 255.5 M968.5 194.5 L980.5 194.5 L980.5 255.5 M968.5 200.5 L974.5 200.5 L974.5 255.5 M468.5 541.5 L468.5 593.5 M953.5 541.5 L953.5 593.5 M473.5 541.5 L473.5 593.5 M948.5 541.5 L948.5 593.5 M477.5 596.5 L667.5 596.5 M945.5 596.5 L755.5 596.5 M477.5 602.5 L667.5 602.5 M945.5 602.5 L755.5 602.5"/>
<path stroke="#ffbf7f" stroke-width="1" d="M442.5 330.5 L363.5 330.5 L363.5 541.5 L388.5 541.5 L388.5 535.5 M979.5 330.5 L1058.5 330.5 L1058.5 541.5 L1033.5 541.5 L1033.5 535.5 M442.5 330.5 L442.5 255.5 L514.5 255.5 L514.5 260.5 L447.5 260.5 L447.5 367.5 L439.5 367.5 L439.5 379.5 M979.5 330.5 L979.5 255.5 L907.5 255.5 L907.5 260.5 L974.5 260.5 L974.5 367.5 L982.5 367.5 L982.5 379.5 M436.5 379.5 L436.5 365.5 L442.5 365.5 L442.5 336.5 L369.5 336.5 L369.5 405.5 L436.5 405.5 L436.5 401.5 M985.5 379.5 L985.5 365.5 L979.5 365.5 L979.5 336.5 L1052.5 336.5 L1052.5 405.5 L985.5 405.5 L985.5 401.5 M439.5 401.5 L439.5 405.5 M982.5 401.5 L982.5 405.5 M388.5 535.5 L369.5 535.5 L369.5 408.5 M1033.5 535.5 L1052.5 535.5 L1052.5 408.5 M465.5 408.5 L465.5 405.5 L471.5 405.5 L471.5 535.5 M956.5 408.5 L956.5 405.5 L950.5 405.5 L950.5 535.5 M468.5 408.5 L468.5 535.5 M953.5 408.5 L953.5 535.5 M449.5 535.5 L505.5 535.5 L505.5 541.5 L449.5 541.5Z M972.5 535.5 L916.5 535.5 L916.5 541.5 L972.5 541.5Z M607.5 535.5 L607.5 405.5 L617.5 405.5 L617.5 411.5 L612.5 411.5 L612.5 541.5 L575.5 541.5 L575.5 535.5 L607.5 535.5 M814.5 535.5 L814.5 405.5 L804.5 405.5 L804.5 411.5 L809.5 411.5 L809.5 541.5 L846.5 541.5 L846.5 535.5 L814.5 535.5 M607.5 255.5 L583.5 255.5 L583.5 260.5 L607.5 260.5 L607.5 272.5 L612.5 272.5 M814.5 255.5 L838.5 255.5 L838.5 260.5 L814.5 260.5 L814.5 272.5 L809.5 272.5 M607.5 255.5 L607.5 194.5 L691.5 194.5 L691.5 304.5 L676.5 304.5 L676.5 317.5 L671.5 317.5 M814.5 255.5 L814.5 194.5 L730.5 194.5 L730.5 304.5 L745.5 304.5 L745.5 317.5 L750.5 317.5 M612.5 200.5 L685.5 200.5 L685.5 298.5 L612.5 298.5Z M809.5 200.5 L736.5 200.5 L736.5 298.5 L809.5 298.5Z M612.5 295.5 L607.5 295.5 L607.5 367.5 L662.5 367.5 L662.5 369.5 L665.5 369.5 M809.5 295.5 L814.5 295.5 L814.5 367.5 L759.5 367.5 L759.5 369.5 L756.5 369.5 M612.5 304.5 L671.5 304.5 L671.5 362.5 L612.5 362.5Z M809.5 304.5 L750.5 304.5 L750.5 362.5 L809.5 362.5Z M671.5 349.5 L676.5 349.5 L676.5 367.5 L665.5 367.5 M750.5 349.5 L745.5 349.5 L745.5 367.5 L756.5 367.5 M658.5 411.5 L658.5 405.5 L663.5 405.5 L663.5 404.5 L693.5 404.5 L693.5 411.5 L691.5 411.5 L691.5 428.5 M763.5 411.5 L763.5 405.5 L758.5 405.5 L758.5 404.5 L728.5 404.5 L728.5 411.5 L730.5 411.5 L730.5 428.5 M676.5 408.5 L691.5 408.5 L691.5 434.5 L676.5 434.5Z M745.5 408.5 L730.5 408.5 L730.5 434.5 L745.5 434.5Z M691.5 434.5 L695.5 434.5 L695.5 440.5 L676.5 440.5 L676.5 573.5 L689.5 573.5 L689.5 579.5 L676.5 579.5 L676.5 602.5 L667.5 602.5 L667.5 593.5 M730.5 434.5 L726.5 434.5 L726.5 440.5 L745.5 440.5 L745.5 573.5 L732.5 573.5 L732.5 579.5 L745.5 579.5 L745.5 602.5 L754.5 602.5 L754.5 593.5 M658.5 411.5 L670.5 411.5 L670.5 593.5 M763.5 411.5 L751.5 411.5 L751.5 593.5"/>
<path stroke="#00ffff" stroke-width="1" d="M612.5 194.5 L656.5 194.5 M809.5 194.5 L765.5 194.5 M612.5 196.5 L656.5 196.5 M809.5 196.5 L765.5 196.5 M612.5 198.5 L656.5 198.5 M809.5 198.5 L765.5 198.5 M612.5 200.5 L656.5 200.5 M809.5 200.5 L765.5 200.5 M612.5 194.5 L612.5 200.5 M809.5 194.5 L809.5 200.5 M656.5 194.5 L656.5 200.5 M765.5 194.5 L765.5 200.5 M382.5 330.5 L425.5 330.5 M1039.5 330.5 L996.5 330.5 M382.5 332.5 L425.5 332.5 M1039.5 332.5 L996.5 332.5 M382.5 334.5 L425.5 334.5 M1039.5 334.5 L996.5 334.5 M382.5 336.5 L425.5 336.5 M1039.5 336.5 L996.5 336.5 M382.5 330.5 L382.5 336.5 M1039.5 330.5 L1039.5 336.5 M425.5 330.5 L425.5 336.5 M996.5 330.5 L996.5 336.5 M691.5 298.5 L731.5 298.5 M691.5 300.5 L731.5 300.5 M691.5 302.5 L731.5 302.5 M691.5 304.5 L731.5 304.5 M691.5 298.5 L691.5 304.5 M731.5 298.5 L731.5 304.5 M689.5 573.5 L733.5 573.5 M689.5 575.5 L733.5 575.5 M689.5 577.5 L733.5 577.5 M689.5 579.5 L733.5 579.5 M689.5 573.5 L689.5 579.5 M733.5 573.5 L733.5 579.5 M442.5 269.5 L442.5 304.5 M979.5 269.5 L979.5 304.5 M444.5 269.5 L444.5 304.5 M977.5 269.5 L977.5 304.5 M445.5 269.5 L445.5 304.5 M976.5 269.5 L976.5 304.5 M447.5 269.5 L447.5 304.5 M974.5 269.5 L974.5 304.5 M442.5 269.5 L447.5 269.5 M979.5 269.5 L974.5 269.5 M442.5 304.5 L447.5 304.5 M979.5 304.5 L974.5 304.5 M536.5 259.5 L546.5 259.5 M886.5 259.5 L875.5 259.5 M552.5 259.5 L562.5 259.5 M869.5 259.5 L860.5 259.5 M617.5 411.5 L658.5 411.5 M804.5 411.5 L763.5 411.5 M505.5 536.5 L575.5 536.5 M916.5 536.5 L846.5 536.5 M505.5 541.5 L575.5 541.5 M916.5 541.5 L846.5 541.5 M388.5 535.5 L449.5 535.5 M1033.5 535.5 L972.5 535.5 M385.5 541.5 L385.5 559.5 L453.5 559.5 L453.5 541.5 M1036.5 541.5 L1036.5 559.5 L968.5 559.5 L968.5 541.5 M388.5 541.5 L388.5 555.5 L451.5 555.5 L451.5 541.5 M1033.5 541.5 L1033.5 555.5 L971.5 555.5 L971.5 541.5 M389.5 541.5 L389.5 554.5 L450.5 554.5 L450.5 541.5 M1032.5 541.5 L1032.5 554.5 L972.5 554.5 L972.5 541.5 M612.5 272.5 L612.5 294.5 M809.5 272.5 L809.5 294.5 M437.5 379.5 L437.5 401.5 M984.5 379.5 L984.5 401.5 M463.5 407.5 L463.5 432.5 M958.5 407.5 L958.5 432.5 M465.5 407.5 L465.5 432.5 M956.5 407.5 L956.5 432.5 M463.5 432.5 L465.5 432.5 M958.5 432.5 L956.5 432.5 M693.5 411.5 L693.5 429.5 M693.5 411.5 L709.5 411.5 M732.5 411.5 L732.5 429.5 M716.5 411.5 L732.5 411.5 M696.5 437.5 L696.5 454.5 M730.5 437.5 L730.5 454.5"/>
<path stroke="#ffffff" stroke-width="1" d="M447.5 226.5 L466.5 226.5 L468.5 228.5 L468.5 244.5 L466.5 246.5 L447.5 246.5 M974.5 226.5 L955.5 226.5 L953.5 228.5 L953.5 244.5 L955.5 246.5 L974.5 246.5 M452.5 226.5 L452.5 246.5 M969.5 226.5 L969.5 246.5"/>
<path stroke="#009a9a" stroke-width="1" d="M612.5 216.5 L667.5 216.5 L667.5 298.5 M809.5 216.5 L754.5 216.5 L754.5 298.5 M629.5 202.5 L649.5 202.5 L649.5 215.5 L629.5 215.5Z M792.5 202.5 L772.5 202.5 L772.5 215.5 L792.5 215.5Z M631.5 204.5 L637.5 204.5 L637.5 214.5 L631.5 214.5Z M790.5 204.5 L784.5 204.5 L784.5 214.5 L790.5 214.5Z M639.5 204.5 L648.5 204.5 L648.5 214.5 L639.5 214.5Z M782.5 204.5 L773.5 204.5 L773.5 214.5 L782.5 214.5Z M641.5 202.5 L641.5 207.5 M780.5 202.5 L780.5 207.5 M672.5 201.5 L672.5 217.5 L684.5 217.5 L684.5 211.5 M749.5 201.5 L749.5 217.5 L737.5 217.5 L737.5 211.5 M670.5 226.5 L682.5 226.5 L682.5 250.5 L670.5 250.5Z M751.5 226.5 L739.5 226.5 L739.5 250.5 L751.5 250.5Z M673.5 226.5 L673.5 250.5 M748.5 226.5 L748.5 250.5 M670.5 232.5 L674.5 232.5 M751.5 232.5 L747.5 232.5 M670.5 243.5 L674.5 243.5 M751.5 243.5 L747.5 243.5 M383.5 345.5 L383.5 353.5 M1038.5 345.5 L1038.5 353.5 M431.5 349.5 L442.5 349.5 M991.5 349.5 L979.5 349.5 M369.5 376.5 L387.5 376.5 L387.5 405.5 M1052.5 376.5 L1034.5 376.5 L1034.5 405.5 M373.5 391.5 L376.5 391.5 M1049.5 391.5 L1046.5 391.5"/>
<path stroke="#ffff00" stroke-width="1" d="M448.5 365.5 L476.5 365.5 M448.5 357.5 L476.5 357.5 M448.5 350.5 L476.5 350.5 M448.5 342.5 L476.5 342.5 M448.5 335.5 L476.5 335.5 M448.5 328.5 L476.5 328.5 M448.5 321.5 L461.5 321.5 M476.5 329.5 L476.5 365.5 M946.5 365.5 L974.5 365.5 M946.5 357.5 L974.5 357.5 M946.5 350.5 L974.5 350.5 M946.5 342.5 L974.5 342.5 M946.5 335.5 L974.5 335.5 M946.5 328.5 L974.5 328.5 M946.5 321.5 L959.5 321.5 M946.5 314.5 L946.5 365.5 M625.5 313.5 L667.5 313.5 L667.5 352.5 L625.5 352.5Z M796.5 313.5 L754.5 313.5 L754.5 352.5 L796.5 352.5Z M617.5 318.5 L621.5 318.5 L621.5 347.5 L617.5 347.5Z M804.5 318.5 L800.5 318.5 L800.5 347.5 L804.5 347.5Z M691.5 257.5 L731.5 257.5 M677.5 475.5 L708.5 475.5 M715.5 475.5 L746.5 475.5 M677.5 482.5 L708.5 482.5 M715.5 482.5 L746.5 482.5 M677.5 490.5 L708.5 490.5 M715.5 490.5 L746.5 490.5 M677.5 497.5 L708.5 497.5 M715.5 497.5 L746.5 497.5 M677.5 505.5 L708.5 505.5 M715.5 505.5 L746.5 505.5 M677.5 512.5 L708.5 512.5 M715.5 512.5 L746.5 512.5 M677.5 520.5 L708.5 520.5 M715.5 520.5 L746.5 520.5 M677.5 528.5 L708.5 528.5 M715.5 528.5 L746.5 528.5 M677.5 535.5 L708.5 535.5 M715.5 535.5 L746.5 535.5 M677.5 475.5 L677.5 572.5 M746.5 475.5 L746.5 572.5 M677.5 572.5 L746.5 572.5 M708.5 470.5 L714.5 470.5 L714.5 539.5 L708.5 539.5Z M710.5 472.5 L712.5 472.5 L712.5 537.5 L710.5 537.5Z"/>
<path stroke="#808080" stroke-width="1" d="M369.5 408.5 L420.5 408.5 L420.5 425.5 L369.5 425.5Z M1052.5 408.5 L1001.5 408.5 L1001.5 425.5 L1052.5 425.5Z M371.5 410.5 L418.5 410.5 L418.5 423.5 L371.5 423.5Z M1050.5 410.5 L1003.5 410.5 L1003.5 423.5 L1050.5 423.5Z M372.5 417.5 L418.5 417.5 M1050.5 417.5 L1004.5 417.5 M374.5 412.5 L374.5 422.5 M1047.5 412.5 L1047.5 422.5 M375.5 412.5 L375.5 422.5 M1046.5 412.5 L1046.5 422.5 M380.5 412.5 L380.5 422.5 M1041.5 412.5 L1041.5 422.5 M383.5 412.5 L383.5 422.5 M1038.5 412.5 L1038.5 422.5 M386.5 412.5 L386.5 422.5 M1035.5 412.5 L1035.5 422.5 M387.5 412.5 L387.5 422.5 M1034.5 412.5 L1034.5 422.5 M390.5 412.5 L390.5 422.5 M1031.5 412.5 L1031.5 422.5 M391.5 412.5 L391.5 422.5 M1030.5 412.5 L1030.5 422.5 M404.5 412.5 L404.5 422.5 M1017.5 412.5 L1017.5 422.5 M405.5 412.5 L405.5 422.5 M1016.5 412.5 L1016.5 422.5 M409.5 412.5 L409.5 422.5 M1012.5 412.5 L1012.5 422.5 M410.5 412.5 L410.5 422.5 M1011.5 412.5 L1011.5 422.5 M370.5 467.5 L422.5 467.5 L422.5 505.5 L370.5 505.5Z M1051.5 467.5 L999.5 467.5 L999.5 505.5 L1051.5 505.5Z M372.5 468.5 L381.5 468.5 L381.5 485.5 L372.5 485.5Z M1049.5 468.5 L1040.5 468.5 L1040.5 485.5 L1049.5 485.5Z M372.5 487.5 L381.5 487.5 L381.5 504.5 L372.5 504.5Z M1049.5 487.5 L1040.5 487.5 L1040.5 504.5 L1049.5 504.5Z M384.5 467.5 L384.5 505.5 M1037.5 467.5 L1037.5 505.5 M388.5 467.5 L388.5 483.5 M1033.5 467.5 L1033.5 483.5 M370.5 455.5 L380.5 455.5 L380.5 465.5 L370.5 465.5Z M1051.5 455.5 L1041.5 455.5 L1041.5 465.5 L1051.5 465.5Z M371.5 460.5 L380.5 460.5 M1051.5 460.5 L1042.5 460.5 M375.5 456.5 L375.5 465.5 M1046.5 456.5 L1046.5 465.5 M370.5 506.5 L380.5 506.5 L380.5 516.5 L370.5 516.5Z M1051.5 506.5 L1041.5 506.5 L1041.5 516.5 L1051.5 516.5Z M371.5 511.5 L380.5 511.5 M1051.5 511.5 L1042.5 511.5 M375.5 507.5 L375.5 516.5 M1046.5 507.5 L1046.5 516.5 M471.5 441.5 L484.5 441.5 L484.5 460.5 M950.5 441.5 L937.5 441.5 L937.5 460.5 M484.5 499.5 L484.5 517.5 L471.5 517.5 M937.5 499.5 L937.5 517.5 L950.5 517.5 M472.5 465.5 L474.5 465.5 L474.5 494.5 L472.5 494.5Z M949.5 465.5 L947.5 465.5 L947.5 494.5 L949.5 494.5Z M472.5 449.5 L484.5 449.5 M949.5 449.5 L938.5 449.5 M478.5 443.5 L478.5 455.5 M943.5 443.5 L943.5 455.5 M472.5 509.5 L484.5 509.5 M949.5 509.5 L938.5 509.5 M478.5 503.5 L478.5 515.5 M943.5 503.5 L943.5 515.5 M548.5 420.5 L534.5 420.5 L534.5 527.5 L583.5 527.5 M874.5 420.5 L887.5 420.5 L887.5 527.5 L839.5 527.5 M548.5 419.5 L533.5 419.5 L533.5 528.5 L583.5 528.5 M874.5 419.5 L888.5 419.5 L888.5 528.5 L839.5 528.5 M578.5 420.5 L583.5 420.5 M844.5 420.5 L839.5 420.5 M578.5 419.5 L583.5 419.5 M844.5 419.5 L839.5 419.5 M553.5 419.5 L572.5 419.5 M868.5 419.5 L849.5 419.5 M549.5 450.5 L571.5 450.5 L571.5 494.5 L549.5 494.5Z M872.5 450.5 L850.5 450.5 L850.5 494.5 L872.5 494.5Z M583.5 411.5 L603.5 411.5 L603.5 431.5 L583.5 431.5Z M838.5 411.5 L818.5 411.5 L818.5 431.5 L838.5 431.5Z M583.5 421.5 L603.5 421.5 M838.5 421.5 L818.5 421.5 M593.5 411.5 L593.5 431.5 M828.5 411.5 L828.5 431.5 M583.5 513.5 L603.5 513.5 L603.5 533.5 L583.5 533.5Z M838.5 513.5 L818.5 513.5 L818.5 533.5 L838.5 533.5Z M583.5 523.5 L603.5 523.5 M838.5 523.5 L818.5 523.5 M593.5 513.5 L593.5 533.5 M828.5 513.5 L828.5 533.5 M581.5 454.5 L602.5 454.5 M840.5 454.5 L820.5 454.5 M581.5 472.5 L602.5 472.5 M840.5 472.5 L820.5 472.5 M581.5 490.5 L602.5 490.5 M840.5 490.5 L820.5 490.5"/>
</g>
<g fill="none" shape-rendering="crispEdges">
<path stroke="#ffff00" stroke-width="1" d="M448.5 314.5 L459.5 320 L462 317 L462.5 323.5 L465 321.5 L476.5 329 M946 314.5 L957 320 L959.5 317 L960 323.5 L962.5 321.5 L974 329 M625.5 313.5 L667.5 352.5 M796.5 313.5 L754.5 352.5 M667.5 313.5 L625.5 352.5 M754.5 313.5 L796.5 352.5 M677.5 515.5 L708 502 M677.5 517.5 L708 504"/>
<path d="M633 294.5 A20.5 22 0 0 0 612.5 272.5" stroke="#00ffff" stroke-width="1" fill="none"/>
<g transform="translate(1422 0) scale(-1 1)"><path d="M633 294.5 A20.5 22 0 0 0 612.5 272.5" stroke="#00ffff" stroke-width="1" fill="none"/></g>
<path d="M415.5 401.5 A22 22 0 0 1 437.5 379.5" stroke="#00ffff" stroke-width="1" fill="none"/>
<g transform="translate(1422 0) scale(-1 1)"><path d="M415.5 401.5 A22 22 0 0 1 437.5 379.5" stroke="#00ffff" stroke-width="1" fill="none"/></g>
<path d="M439.5 408.5 A24.5 24.5 0 0 0 464 433" stroke="#00ffff" stroke-width="1" fill="none"/>
<g transform="translate(1422 0) scale(-1 1)"><path d="M439.5 408.5 A24.5 24.5 0 0 0 464 433" stroke="#00ffff" stroke-width="1" fill="none"/></g>
<path d="M675.5 369.8 A10 10 0 0 1 665.5 379.8" stroke="#00ffff" stroke-width="1" fill="none"/>
<g transform="translate(1422 0) scale(-1 1)"><path d="M675.5 369.8 A10 10 0 0 1 665.5 379.8" stroke="#00ffff" stroke-width="1" fill="none"/></g>
<path d="M689 403.3 A23.5 23.5 0 0 0 665.5 379.8" stroke="#00ffff" stroke-width="1" fill="none"/>
<g transform="translate(1422 0) scale(-1 1)"><path d="M689 403.3 A23.5 23.5 0 0 0 665.5 379.8" stroke="#00ffff" stroke-width="1" fill="none"/></g>
<path d="M709.5 411.5 A16 17 0 0 1 693.5 428.5" stroke="#00ffff" stroke-width="1" fill="none"/>
<path d="M716.5 411.5 A16 17 0 0 0 732.5 428.5" stroke="#00ffff" stroke-width="1" fill="none"/>
<path d="M696 454 A16.5 16.5 0 0 0 712.5 437.5" stroke="#00ffff" stroke-width="1" fill="none"/>
<path d="M730 454 A16.5 16.5 0 0 1 713.5 437.5" stroke="#00ffff" stroke-width="1" fill="none"/>
<path d="M672.5 201.5 Q683.5 201.5 684.5 211" stroke="#009a9a" stroke-width="1" fill="none"/>
<g transform="translate(1422 0) scale(-1 1)"><path d="M672.5 201.5 Q683.5 201.5 684.5 211" stroke="#009a9a" stroke-width="1" fill="none"/></g>
<ellipse cx="677.5" cy="232.7" rx="3" ry="3" stroke="#009a9a" stroke-width="1" fill="none"/>
<ellipse cx="744.5" cy="232.7" rx="3" ry="3" stroke="#009a9a" stroke-width="1" fill="none"/>
<ellipse cx="677.5" cy="243.7" rx="3" ry="3" stroke="#009a9a" stroke-width="1" fill="none"/>
<ellipse cx="744.5" cy="243.7" rx="3" ry="3" stroke="#009a9a" stroke-width="1" fill="none"/>
<ellipse cx="677.5" cy="232.7" rx="1.2" ry="1.2" stroke="#009a9a" stroke-width="1" fill="none"/>
<ellipse cx="744.5" cy="232.7" rx="1.2" ry="1.2" stroke="#009a9a" stroke-width="1" fill="none"/>
<ellipse cx="677.5" cy="243.7" rx="1.2" ry="1.2" stroke="#009a9a" stroke-width="1" fill="none"/>
<ellipse cx="744.5" cy="243.7" rx="1.2" ry="1.2" stroke="#009a9a" stroke-width="1" fill="none"/>
<path d="M538.5 292.5 H554.5 Q556.5 292.5 556.5 294.5 V328.5 Q556.5 330.5 554.5 330.5 H538.5 Q536.5 330.5 536.5 328.5 V294.5 Q536.5 292.5 538.5 292.5Z" stroke="#808080" stroke-width="1" fill="none"/>
<g transform="translate(1422 0) scale(-1 1)"><path d="M538.5 292.5 H554.5 Q556.5 292.5 556.5 294.5 V328.5 Q556.5 330.5 554.5 330.5 H538.5 Q536.5 330.5 536.5 328.5 V294.5 Q536.5 292.5 538.5 292.5Z" stroke="#808080" stroke-width="1" fill="none"/></g>
<path d="M544 280.5 H549 Q551.5 280.5 551.5 283 V288 Q551.5 290.5 549 290.5 H544 Q541.5 290.5 541.5 288 V283 Q541.5 280.5 544 280.5Z" stroke="#808080" stroke-width="1" fill="none"/>
<g transform="translate(1422 0) scale(-1 1)"><path d="M544 280.5 H549 Q551.5 280.5 551.5 283 V288 Q551.5 290.5 549 290.5 H544 Q541.5 290.5 541.5 288 V283 Q541.5 280.5 544 280.5Z" stroke="#808080" stroke-width="1" fill="none"/></g>
<path d="M544 332.5 H549 Q551.5 332.5 551.5 335 V340 Q551.5 342.5 549 342.5 H544 Q541.5 342.5 541.5 340 V335 Q541.5 332.5 544 332.5Z" stroke="#808080" stroke-width="1" fill="none"/>
<g transform="translate(1422 0) scale(-1 1)"><path d="M544 332.5 H549 Q551.5 332.5 551.5 335 V340 Q551.5 342.5 549 342.5 H544 Q541.5 342.5 541.5 340 V335 Q541.5 332.5 544 332.5Z" stroke="#808080" stroke-width="1" fill="none"/></g>
<path d="M527 297.5 H533 Q535.5 297.5 535.5 300 V306 Q535.5 308.5 533 308.5 H527 Q524.5 308.5 524.5 306 V300 Q524.5 297.5 527 297.5Z" stroke="#808080" stroke-width="1" fill="none"/>
<g transform="translate(1422 0) scale(-1 1)"><path d="M527 297.5 H533 Q535.5 297.5 535.5 300 V306 Q535.5 308.5 533 308.5 H527 Q524.5 308.5 524.5 306 V300 Q524.5 297.5 527 297.5Z" stroke="#808080" stroke-width="1" fill="none"/></g>
<path d="M527 313.5 H533 Q535.5 313.5 535.5 316 V322 Q535.5 324.5 533 324.5 H527 Q524.5 324.5 524.5 322 V316 Q524.5 313.5 527 313.5Z" stroke="#808080" stroke-width="1" fill="none"/>
<g transform="translate(1422 0) scale(-1 1)"><path d="M527 313.5 H533 Q535.5 313.5 535.5 316 V322 Q535.5 324.5 533 324.5 H527 Q524.5 324.5 524.5 322 V316 Q524.5 313.5 527 313.5Z" stroke="#808080" stroke-width="1" fill="none"/></g>
<path d="M561 297.5 H567 Q569.5 297.5 569.5 300 V306 Q569.5 308.5 567 308.5 H561 Q558.5 308.5 558.5 306 V300 Q558.5 297.5 561 297.5Z" stroke="#808080" stroke-width="1" fill="none"/>
<g transform="translate(1422 0) scale(-1 1)"><path d="M561 297.5 H567 Q569.5 297.5 569.5 300 V306 Q569.5 308.5 567 308.5 H561 Q558.5 308.5 558.5 306 V300 Q558.5 297.5 561 297.5Z" stroke="#808080" stroke-width="1" fill="none"/></g>
<path d="M561 313.5 H567 Q569.5 313.5 569.5 316 V322 Q569.5 324.5 567 324.5 H561 Q558.5 324.5 558.5 322 V316 Q558.5 313.5 561 313.5Z" stroke="#808080" stroke-width="1" fill="none"/>
<g transform="translate(1422 0) scale(-1 1)"><path d="M561 313.5 H567 Q569.5 313.5 569.5 316 V322 Q569.5 324.5 567 324.5 H561 Q558.5 324.5 558.5 322 V316 Q558.5 313.5 561 313.5Z" stroke="#808080" stroke-width="1" fill="none"/></g>
<path d="M379 345.5 H386 Q389.5 345.5 389.5 349 V350 Q389.5 353.5 386 353.5 H379 Q375.5 353.5 375.5 350 V349 Q375.5 345.5 379 345.5Z" stroke="#009a9a" stroke-width="1" fill="none"/>
<g transform="translate(1422 0) scale(-1 1)"><path d="M379 345.5 H386 Q389.5 345.5 389.5 349 V350 Q389.5 353.5 386 353.5 H379 Q375.5 353.5 375.5 350 V349 Q375.5 345.5 379 345.5Z" stroke="#009a9a" stroke-width="1" fill="none"/></g>
<ellipse cx="429.5" cy="349.2" rx="1.4" ry="1.4" stroke="#009a9a" stroke-width="1" fill="none"/>
<ellipse cx="992.5" cy="349.2" rx="1.4" ry="1.4" stroke="#009a9a" stroke-width="1" fill="none"/>
<ellipse cx="379" cy="391.3" rx="5.5" ry="7" stroke="#009a9a" stroke-width="1" fill="none"/>
<ellipse cx="1043" cy="391.3" rx="5.5" ry="7" stroke="#009a9a" stroke-width="1" fill="none"/>
<path d="M384.5 480 Q388 490 390.5 496 Q392 500 392 505.5" stroke="#808080" stroke-width="1" fill="none"/>
<g transform="translate(1422 0) scale(-1 1)"><path d="M384.5 480 Q388 490 390.5 496 Q392 500 392 505.5" stroke="#808080" stroke-width="1" fill="none"/></g>
<path d="M388.5 483 Q390 487 390.5 496" stroke="#808080" stroke-width="1" fill="none"/>
<g transform="translate(1422 0) scale(-1 1)"><path d="M388.5 483 Q390 487 390.5 496" stroke="#808080" stroke-width="1" fill="none"/></g>
<ellipse cx="375.5" cy="460.5" rx="3.3" ry="3.3" stroke="#808080" stroke-width="1" fill="none"/>
<ellipse cx="1046.5" cy="460.5" rx="3.3" ry="3.3" stroke="#808080" stroke-width="1" fill="none"/>
<ellipse cx="375.5" cy="511.5" rx="3.3" ry="3.3" stroke="#808080" stroke-width="1" fill="none"/>
<ellipse cx="1046.5" cy="511.5" rx="3.3" ry="3.3" stroke="#808080" stroke-width="1" fill="none"/>
<path d="M484.5 460 Q489.5 470 488.8 479.5 Q489.5 489 484.5 499" stroke="#808080" stroke-width="1" fill="none"/>
<g transform="translate(1422 0) scale(-1 1)"><path d="M484.5 460 Q489.5 470 488.8 479.5 Q489.5 489 484.5 499" stroke="#808080" stroke-width="1" fill="none"/></g>
<ellipse cx="478.3" cy="449" rx="4.3" ry="4.3" stroke="#808080" stroke-width="1" fill="none"/>
<ellipse cx="943.7" cy="449" rx="4.3" ry="4.3" stroke="#808080" stroke-width="1" fill="none"/>
<ellipse cx="478.3" cy="449" rx="2" ry="2" stroke="#808080" stroke-width="1" fill="none"/>
<ellipse cx="943.7" cy="449" rx="2" ry="2" stroke="#808080" stroke-width="1" fill="none"/>
<ellipse cx="478.3" cy="509" rx="4.3" ry="4.3" stroke="#808080" stroke-width="1" fill="none"/>
<ellipse cx="943.7" cy="509" rx="4.3" ry="4.3" stroke="#808080" stroke-width="1" fill="none"/>
<ellipse cx="478.3" cy="509" rx="2" ry="2" stroke="#808080" stroke-width="1" fill="none"/>
<ellipse cx="943.7" cy="509" rx="2" ry="2" stroke="#808080" stroke-width="1" fill="none"/>
<g stroke="#808080" fill="none" stroke-width="4" stroke-dasharray="1 1"><path d="M531 416.500 V530"/><path d="M531 416.500 H548 M578 416.500 H583"/><path d="M531 530 H583"/><path d="M891 416.500 V530"/><path d="M891 416.500 H874 M844 416.500 H839"/><path d="M891 530 H839"/></g>
<path d="M553.5 411.5 H572.5 Q577.5 411.5 577.5 416.5 V432.5 Q577.5 437.5 572.5 437.5 H553.5 Q548.5 437.5 548.5 432.5 V416.5 Q548.5 411.5 553.5 411.5Z" stroke="#808080" stroke-width="1" fill="none"/>
<g transform="translate(1422 0) scale(-1 1)"><path d="M553.5 411.5 H572.5 Q577.5 411.5 577.5 416.5 V432.5 Q577.5 437.5 572.5 437.5 H553.5 Q548.5 437.5 548.5 432.5 V416.5 Q548.5 411.5 553.5 411.5Z" stroke="#808080" stroke-width="1" fill="none"/></g>
<path d="M553.5 437.5 V420.5 Q553.5 416.5 558 416.5 H568 Q572.5 416.5 572.5 420.5 V437.5" stroke="#808080" stroke-width="1" fill="none"/>
<g transform="translate(1422 0) scale(-1 1)"><path d="M553.5 437.5 V420.5 Q553.5 416.5 558 416.5 H568 Q572.5 416.5 572.5 420.5 V437.5" stroke="#808080" stroke-width="1" fill="none"/></g>
<ellipse cx="593.5" cy="421.5" rx="5" ry="5" stroke="#808080" stroke-width="1" fill="none"/>
<ellipse cx="828.5" cy="421.5" rx="5" ry="5" stroke="#808080" stroke-width="1" fill="none"/>
<ellipse cx="593.5" cy="523.5" rx="5" ry="5" stroke="#808080" stroke-width="1" fill="none"/>
<ellipse cx="828.5" cy="523.5" rx="5" ry="5" stroke="#808080" stroke-width="1" fill="none"/>
<path d="M585.5 432.5 H602.5 Q606.5 432.5 606.5 436.5 V508.5 Q606.5 512.5 602.5 512.5 H585.5 Q581.5 512.5 581.5 508.5 V436.5 Q581.5 432.5 585.5 432.5Z" stroke="#808080" stroke-width="1" fill="none"/>
<g transform="translate(1422 0) scale(-1 1)"><path d="M585.5 432.5 H602.5 Q606.5 432.5 606.5 436.5 V508.5 Q606.5 512.5 602.5 512.5 H585.5 Q581.5 512.5 581.5 508.5 V436.5 Q581.5 432.5 585.5 432.5Z" stroke="#808080" stroke-width="1" fill="none"/></g>
<path d="M598.5 436 V509 M602 440 V452 M602 457 V470 M602 475 V488 M602 493 V506" stroke="#808080" stroke-width="1" fill="none"/>
<g transform="translate(1422 0) scale(-1 1)"><path d="M598.5 436 V509 M602 440 V452 M602 457 V470 M602 475 V488 M602 493 V506" stroke="#808080" stroke-width="1" fill="none"/></g>
<path d="M396.5 542.5 H415.5 Q417.5 542.5 417.5 544.5 V550.5 Q417.5 552.5 415.5 552.5 H396.5 Q394.5 552.5 394.5 550.5 V544.5 Q394.5 542.5 396.5 542.5Z" stroke="#ffbf7f" stroke-width="1" fill="none" stroke-dasharray="4 2.5"/>
<g transform="translate(1422 0) scale(-1 1)"><path d="M396.5 542.5 H415.5 Q417.5 542.5 417.5 544.5 V550.5 Q417.5 552.5 415.5 552.5 H396.5 Q394.5 552.5 394.5 550.5 V544.5 Q394.5 542.5 396.5 542.5Z" stroke="#ffbf7f" stroke-width="1" fill="none" stroke-dasharray="4 2.5"/></g>
<path d="M422.5 542.5 H441.5 Q443.5 542.5 443.5 544.5 V550.5 Q443.5 552.5 441.5 552.5 H422.5 Q420.5 552.5 420.5 550.5 V544.5 Q420.5 542.5 422.5 542.5Z" stroke="#ffbf7f" stroke-width="1" fill="none" stroke-dasharray="4 2.5"/>
<g transform="translate(1422 0) scale(-1 1)"><path d="M422.5 542.5 H441.5 Q443.5 542.5 443.5 544.5 V550.5 Q443.5 552.5 441.5 552.5 H422.5 Q420.5 552.5 420.5 550.5 V544.5 Q420.5 542.5 422.5 542.5Z" stroke="#ffbf7f" stroke-width="1" fill="none" stroke-dasharray="4 2.5"/></g>
<path d="M701.5 264.5 H720.5 Q722.5 264.5 722.5 266.5 V273.5 Q722.5 275.5 720.5 275.5 H701.5 Q699.5 275.5 699.5 273.5 V266.5 Q699.5 264.5 701.5 264.5Z" stroke="#ffbf7f" stroke-width="1" fill="none" stroke-dasharray="4 2.5"/>
<path d="M701.5 278.5 H720.5 Q722.5 278.5 722.5 280.5 V287.5 Q722.5 289.5 720.5 289.5 H701.5 Q699.5 289.5 699.5 287.5 V280.5 Q699.5 278.5 701.5 278.5Z" stroke="#ffbf7f" stroke-width="1" fill="none" stroke-dasharray="4 2.5"/></g>
<g><text class="lat" x="405.75" y="143" fill="#ffffff" text-anchor="middle" textLength="22.4" lengthAdjust="spacingAndGlyphs" style="font-size:14px;">2700</text>
<text class="lat" x="527.25" y="143" fill="#ffffff" text-anchor="middle" textLength="22.4" lengthAdjust="spacingAndGlyphs" style="font-size:14px;">5700</text>
<text class="lat" x="641.5" y="143" fill="#ffffff" text-anchor="middle" textLength="22.4" lengthAdjust="spacingAndGlyphs" style="font-size:14px;">2200</text>
<text class="lat" x="681" y="143" fill="#ffffff" text-anchor="middle" textLength="16.8" lengthAdjust="spacingAndGlyphs" style="font-size:14px;">500</text>
<text class="lat" x="711.5" y="143" fill="#ffffff" text-anchor="middle" textLength="22.4" lengthAdjust="spacingAndGlyphs" style="font-size:14px;">1600</text>
<text class="lat" x="741.5" y="143" fill="#ffffff" text-anchor="middle" textLength="16.8" lengthAdjust="spacingAndGlyphs" style="font-size:14px;">500</text>
<text class="lat" x="780.5" y="143" fill="#ffffff" text-anchor="middle" textLength="22.4" lengthAdjust="spacingAndGlyphs" style="font-size:14px;">2200</text>
<text class="lat" x="895" y="143" fill="#ffffff" text-anchor="middle" textLength="22.4" lengthAdjust="spacingAndGlyphs" style="font-size:14px;">5700</text>
<text class="lat" x="1016.5" y="143" fill="#ffffff" text-anchor="middle" textLength="22.4" lengthAdjust="spacingAndGlyphs" style="font-size:14px;">2700</text>
<text class="lat" x="711" y="120" fill="#ffffff" text-anchor="middle" textLength="28" lengthAdjust="spacingAndGlyphs" style="font-size:14px;">23800</text>
<text class="lat" x="419" y="650" fill="#ffffff" text-anchor="middle" textLength="22.4" lengthAdjust="spacingAndGlyphs" style="font-size:14px;">3600</text>
<text class="lat" x="540.5" y="650" fill="#ffffff" text-anchor="middle" textLength="22.4" lengthAdjust="spacingAndGlyphs" style="font-size:14px;">4800</text>
<text class="lat" x="641.5" y="650" fill="#ffffff" text-anchor="middle" textLength="22.4" lengthAdjust="spacingAndGlyphs" style="font-size:14px;">2200</text>
<text class="lat" x="711" y="650" fill="#ffffff" text-anchor="middle" textLength="22.4" lengthAdjust="spacingAndGlyphs" style="font-size:14px;">2600</text>
<text class="lat" x="780.5" y="650" fill="#ffffff" text-anchor="middle" textLength="22.4" lengthAdjust="spacingAndGlyphs" style="font-size:14px;">2200</text>
<text class="lat" x="882" y="650" fill="#ffffff" text-anchor="middle" textLength="22.4" lengthAdjust="spacingAndGlyphs" style="font-size:14px;">4800</text>
<text class="lat" x="1003.5" y="650" fill="#ffffff" text-anchor="middle" textLength="22.4" lengthAdjust="spacingAndGlyphs" style="font-size:14px;">3600</text>
<text class="lat" x="711" y="673" fill="#ffffff" text-anchor="middle" textLength="28" lengthAdjust="spacingAndGlyphs" style="font-size:14px;">23800</text>
<text class="lat" x="318" y="227.5" fill="#ffffff" text-anchor="middle" textLength="22.4" lengthAdjust="spacingAndGlyphs" transform="rotate(-90 318 227.5)" style="font-size:14px;">2100</text>
<text class="lat" x="318" y="279.5" fill="#ffffff" text-anchor="middle" textLength="22.4" lengthAdjust="spacingAndGlyphs" transform="rotate(-90 318 279.5)" style="font-size:14px;">1500</text>
<text class="lat" x="318" y="317.5" fill="#ffffff" text-anchor="middle" textLength="22.4" lengthAdjust="spacingAndGlyphs" transform="rotate(-90 318 317.5)" style="font-size:14px;">1100</text>
<text class="lat" x="318" y="349.5" fill="#ffffff" text-anchor="middle" textLength="22.4" lengthAdjust="spacingAndGlyphs" transform="rotate(-90 318 349.5)" style="font-size:14px;">1100</text>
<text class="lat" x="318" y="387" fill="#ffffff" text-anchor="middle" textLength="22.4" lengthAdjust="spacingAndGlyphs" transform="rotate(-90 318 387)" style="font-size:14px;">1500</text>
<text class="lat" x="318" y="473.5" fill="#ffffff" text-anchor="middle" textLength="22.4" lengthAdjust="spacingAndGlyphs" transform="rotate(-90 318 473.5)" style="font-size:14px;">4500</text>
<text class="lat" x="318" y="569" fill="#ffffff" text-anchor="middle" textLength="22.4" lengthAdjust="spacingAndGlyphs" transform="rotate(-90 318 569)" style="font-size:14px;">2100</text>
<text class="lat" x="295" y="398" fill="#ffffff" text-anchor="middle" textLength="28" lengthAdjust="spacingAndGlyphs" transform="rotate(-90 295 398)" style="font-size:14px;">13900</text>
<text class="lat" x="1107" y="227.5" fill="#ffffff" text-anchor="middle" textLength="22.4" lengthAdjust="spacingAndGlyphs" transform="rotate(-90 1107 227.5)" style="font-size:14px;">2100</text>
<text class="lat" x="1107" y="279.5" fill="#ffffff" text-anchor="middle" textLength="22.4" lengthAdjust="spacingAndGlyphs" transform="rotate(-90 1107 279.5)" style="font-size:14px;">1500</text>
<text class="lat" x="1107" y="317.5" fill="#ffffff" text-anchor="middle" textLength="22.4" lengthAdjust="spacingAndGlyphs" transform="rotate(-90 1107 317.5)" style="font-size:14px;">1100</text>
<text class="lat" x="1107" y="349.5" fill="#ffffff" text-anchor="middle" textLength="22.4" lengthAdjust="spacingAndGlyphs" transform="rotate(-90 1107 349.5)" style="font-size:14px;">1100</text>
<text class="lat" x="1107" y="387" fill="#ffffff" text-anchor="middle" textLength="22.4" lengthAdjust="spacingAndGlyphs" transform="rotate(-90 1107 387)" style="font-size:14px;">1500</text>
<text class="lat" x="1107" y="473.5" fill="#ffffff" text-anchor="middle" textLength="22.4" lengthAdjust="spacingAndGlyphs" transform="rotate(-90 1107 473.5)" style="font-size:14px;">4500</text>
<text class="lat" x="1107" y="569" fill="#ffffff" text-anchor="middle" textLength="22.4" lengthAdjust="spacingAndGlyphs" transform="rotate(-90 1107 569)" style="font-size:14px;">2100</text>
<text class="lat" x="1130.5" y="398" fill="#ffffff" text-anchor="middle" textLength="28" lengthAdjust="spacingAndGlyphs" transform="rotate(-90 1130.5 398)" style="font-size:14px;">13900</text>
<text class="cjk" x="541.5" y="231.14" fill="#ff4500" text-anchor="middle" textLength="19" lengthAdjust="spacingAndGlyphs" style="font-size:11.5px;font-weight:bold;">阳台</text>
<text class="cjk" x="883" y="231.14" fill="#ff4500" text-anchor="middle" textLength="19" lengthAdjust="spacingAndGlyphs" style="font-size:11.5px;font-weight:bold;">阳台</text>
<text class="cjk" x="640.5" y="253.14" fill="#ff4500" text-anchor="middle" textLength="19" lengthAdjust="spacingAndGlyphs" style="font-size:11.5px;font-weight:bold;">厨房</text>
<text class="cjk" x="781" y="253.14" fill="#ff4500" text-anchor="middle" textLength="19" lengthAdjust="spacingAndGlyphs" style="font-size:11.5px;font-weight:bold;">厨房</text>
<text class="cjk" x="543.5" y="315.14" fill="#ff4500" text-anchor="middle" textLength="19" lengthAdjust="spacingAndGlyphs" style="font-size:11.5px;font-weight:bold;">餐厅</text>
<text class="cjk" x="879" y="315.14" fill="#ff4500" text-anchor="middle" textLength="19" lengthAdjust="spacingAndGlyphs" style="font-size:11.5px;font-weight:bold;">餐厅</text>
<text class="cjk" x="639.5" y="394.14" fill="#ff4500" text-anchor="middle" textLength="19" lengthAdjust="spacingAndGlyphs" style="font-size:11.5px;font-weight:bold;">玄关</text>
<text class="cjk" x="790" y="394.14" fill="#ff4500" text-anchor="middle" textLength="19" lengthAdjust="spacingAndGlyphs" style="font-size:11.5px;font-weight:bold;">玄关</text>
<text class="cjk" x="434.5" y="491.44" fill="#ff4500" text-anchor="middle" textLength="19" lengthAdjust="spacingAndGlyphs" style="font-size:11.5px;font-weight:bold;">次卧</text>
<text class="cjk" x="989" y="491.44" fill="#ff4500" text-anchor="middle" textLength="19" lengthAdjust="spacingAndGlyphs" style="font-size:11.5px;font-weight:bold;">次卧</text>
<text class="cjk" x="536" y="482.84" fill="#ff4500" text-anchor="middle" textLength="19" lengthAdjust="spacingAndGlyphs" style="font-size:11.5px;font-weight:bold;">客厅</text>
<text class="cjk" x="887.5" y="482.84" fill="#ff4500" text-anchor="middle" textLength="19" lengthAdjust="spacingAndGlyphs" style="font-size:11.5px;font-weight:bold;">客厅</text>
<text class="cjk" x="564.5" y="577.14" fill="#ff4500" text-anchor="middle" textLength="19" lengthAdjust="spacingAndGlyphs" style="font-size:11.5px;font-weight:bold;">阳台</text>
<text class="cjk" x="860" y="577.14" fill="#ff4500" text-anchor="middle" textLength="19" lengthAdjust="spacingAndGlyphs" style="font-size:11.5px;font-weight:bold;">阳台</text>
<text class="cjk" x="694.7" y="462.46" fill="#ff4500" text-anchor="middle" textLength="9" lengthAdjust="spacingAndGlyphs" style="font-size:11px;font-weight:bold;">上</text>
<text class="cjk" x="731" y="462.46" fill="#ff4500" text-anchor="middle" textLength="9" lengthAdjust="spacingAndGlyphs" style="font-size:11px;font-weight:bold;">下</text>
<text class="lat" x="684.7" y="423.3" fill="#ff4500" text-anchor="middle" textLength="4.5" lengthAdjust="spacingAndGlyphs" style="font-size:10.5px;font-weight:bold;">D</text>
<text class="lat" x="740" y="423.3" fill="#ff4500" text-anchor="middle" textLength="7" lengthAdjust="spacingAndGlyphs" style="font-size:10.5px;font-weight:bold;">IF</text>
<text class="lat" x="460.4" y="532.8" fill="#ff4500" text-anchor="middle" textLength="8" lengthAdjust="spacingAndGlyphs" style="font-size:10.5px;font-weight:bold;">D2</text>
<text class="lat" x="476" y="532.8" fill="#ff4500" text-anchor="middle" textLength="8" lengthAdjust="spacingAndGlyphs" style="font-size:10.5px;font-weight:bold;">D1</text>
<text class="lat" x="946" y="532.8" fill="#ff4500" text-anchor="middle" textLength="8" lengthAdjust="spacingAndGlyphs" style="font-size:10.5px;font-weight:bold;">D1</text>
<text class="lat" x="962" y="532.8" fill="#ff4500" text-anchor="middle" textLength="8" lengthAdjust="spacingAndGlyphs" style="font-size:10.5px;font-weight:bold;">D2</text>
<text class="cjk" x="405.3" y="552" fill="#ff4500" text-anchor="middle" textLength="8" lengthAdjust="spacingAndGlyphs" style="font-size:9px;font-weight:bold;">冗</text>
<text class="cjk" x="430.7" y="552" fill="#ff4500" text-anchor="middle" textLength="8" lengthAdjust="spacingAndGlyphs" style="font-size:9px;font-weight:bold;">冗</text>
<text class="cjk" x="991.3" y="552" fill="#ff4500" text-anchor="middle" textLength="8" lengthAdjust="spacingAndGlyphs" style="font-size:9px;font-weight:bold;">冗</text>
<text class="cjk" x="1016.7" y="552" fill="#ff4500" text-anchor="middle" textLength="8" lengthAdjust="spacingAndGlyphs" style="font-size:9px;font-weight:bold;">冗</text>
<text class="cjk" x="710.7" y="274" fill="#ff4500" text-anchor="middle" textLength="8" lengthAdjust="spacingAndGlyphs" style="font-size:9px;font-weight:bold;">冗</text>
<text class="cjk" x="710.7" y="287.5" fill="#ff4500" text-anchor="middle" textLength="8" lengthAdjust="spacingAndGlyphs" style="font-size:9px;font-weight:bold;">冗</text></g>
</svg><div class="abs" style="left:886px;top:15px;width:234px;height:26px;border-radius:5px;background:linear-gradient(180deg,#dcdcde 0%,#bcbcc0 40%,#96969a 100%);border:1px solid #c8c8c8;font-size:12px;line-height:24px;color:#1a1a38;padding-left:9px;white-space:nowrap">本地字库已更新，请 <span style="color:#3a6a12;margin-left:2px">【重新打开 】</span><svg style="left:220px;top:3px" width="8" height="8" viewBox="0 0 8 8"><path d="M1 1 L7 7 M7 1 L1 7" stroke="#fff" stroke-width="1.8"/></svg></div>
</div>
<div id="sb">
 <svg style="left:0;top:0" width="1280" height="27" viewBox="0 0 1280 27">
  <rect x="5" y="2" width="19" height="19" fill="#c8201c"/><path d="M5 2 h19 L5 21z" fill="#f4c21c"/><path d="M6 4 L15 15" stroke="#fff" stroke-width="2"/><path d="M13 17 l5 -5 l5 5 h-2 v4 h-6 v-4z" fill="#fff"/>
 </svg>
 <div class="abs" style="left:27px;top:3px;font-size:12px;line-height:16px;color:#6a6a6a;white-space:nowrap;letter-spacing:-.4px">CAD迷你家装</div>
 <div class="sbtn" style="left:147px;top:3px;width:72px"></div>
 <div class="abs" style="left:165px;top:4px;font-size:12px;line-height:16px;color:#555;white-space:nowrap">快捷命令</div>
 <div class="abs" style="left:225px;top:3px;width:425px;height:19px;background:#fff;border:1px solid #8a8a8a;border-radius:2px"></div>
 <div class="abs" style="left:990px;top:3px;width:149px;height:18px;border:1px solid #8a8a8a;border-radius:2px;background:linear-gradient(180deg,#e0e0e0,#fafafa)"></div>
 <div class="abs" style="left:1111px;top:4px;width:27px;height:16px;border-left:1px solid #9a9a9a;background:linear-gradient(180deg,#f4f4f4,#cfcfcf)"></div>
 <div class="abs" style="left:994px;top:4px;font-size:12px;line-height:16px;color:#8a8a8a">搜索文字</div>
 <div class="sbtn" style="left:1143px;top:1px;width:21px;height:22px"></div>
 <div class="sbtn" style="left:1168px;top:1px;width:22px;height:22px;background:linear-gradient(180deg,#eaf6fc,#bfe2f4)"></div>
 <div class="sbtn" style="left:1194px;top:1px;width:22px;height:22px"></div>
 <div class="sbtn" style="left:1220px;top:1px;width:22px;height:22px"></div>
 <div class="sbtn" style="left:1246px;top:1px;width:22px;height:22px"></div>
 <svg style="left:0;top:0" width="1280" height="27" viewBox="0 0 1280 27">
  <path d="M158.500 5.500 l-4.500 7 h4 l-2.500 6 l5.500 -8 h-4 l2.500 -5z" fill="none" stroke="#444" stroke-width="1"/>
  <circle cx="1123" cy="10.500" r="3.800" fill="none" stroke="#777" stroke-width="1.500"/><path d="M1126 13.500 l4 4" stroke="#777" stroke-width="2"/>
  <path d="M1148.500 6.500 v10 h8z M1151 12 v2.500 h2z" fill="none" stroke="#222" stroke-width="1"/><path d="M1146 20 h15" stroke="#333" stroke-width="1.200"/>
  <path d="M1179 5.500 v13 M1172.500 12 h13" stroke="#111" stroke-width="1.500"/>
  <path d="M1205 4.500 q2.500 6 0 9 q-2.500 -3 0 -9z M1205 13.500 q4.500 .5 7 5 q-5 0 -7 -5z M1205 13.500 q-4.500 .5 -7 5 q5 0 7 -5z" fill="#f4f4f4" stroke="#333" stroke-width="1"/>
  <g transform="rotate(30 1231 12)"><path d="M1231 12 L1231 4.500 A7.500 7.500 0 0 1 1237.500 8.200Z" fill="#f2a020"/><path d="M1231 12 L1237.500 8.200 A7.500 7.500 0 0 1 1237.500 15.800Z" fill="#e82020"/><path d="M1231 12 L1237.500 15.800 A7.500 7.500 0 0 1 1231 19.500Z" fill="#9030c0"/><path d="M1231 12 L1231 19.500 A7.500 7.500 0 0 1 1224.500 15.800Z" fill="#3050e0"/><path d="M1231 12 L1224.500 15.800 A7.500 7.500 0 0 1 1224.500 8.200Z" fill="#30b030"/><path d="M1231 12 L1224.500 8.200 A7.500 7.500 0 0 1 1231 4.500Z" fill="#e8e020"/><circle cx="1231" cy="12" r="7.500" fill="none" stroke="#555"/></g>
  <ellipse cx="1256.500" cy="12.500" rx="7" ry="4.500" transform="rotate(-30 1256.500 12.500)" fill="#eee" stroke="#555" stroke-width="1.200"/><circle cx="1261.500" cy="8" r="2.500" fill="#fff" stroke="#666" stroke-width="1"/>
 </svg>
</div>
<div class="abs" style="left:0;top:720px;width:1280px;height:1px;background:#fafafa"></div><div class="abs" style="left:0;top:721px;width:1280px;height:1px;background:#8e8e8e"></div><div class="abs" style="left:1278px;top:30px;width:1px;height:691px;background:#fafafa"></div><div class="abs" style="left:1279px;top:0;width:1px;height:722px;background:#8e8e8e"></div><div class="abs" style="left:0;top:30px;width:1px;height:692px;background:#8e8e8e"></div><div class="abs" style="left:1px;top:30px;width:1px;height:691px;background:#fafafa"></div>

</div>
</body>
</html>
